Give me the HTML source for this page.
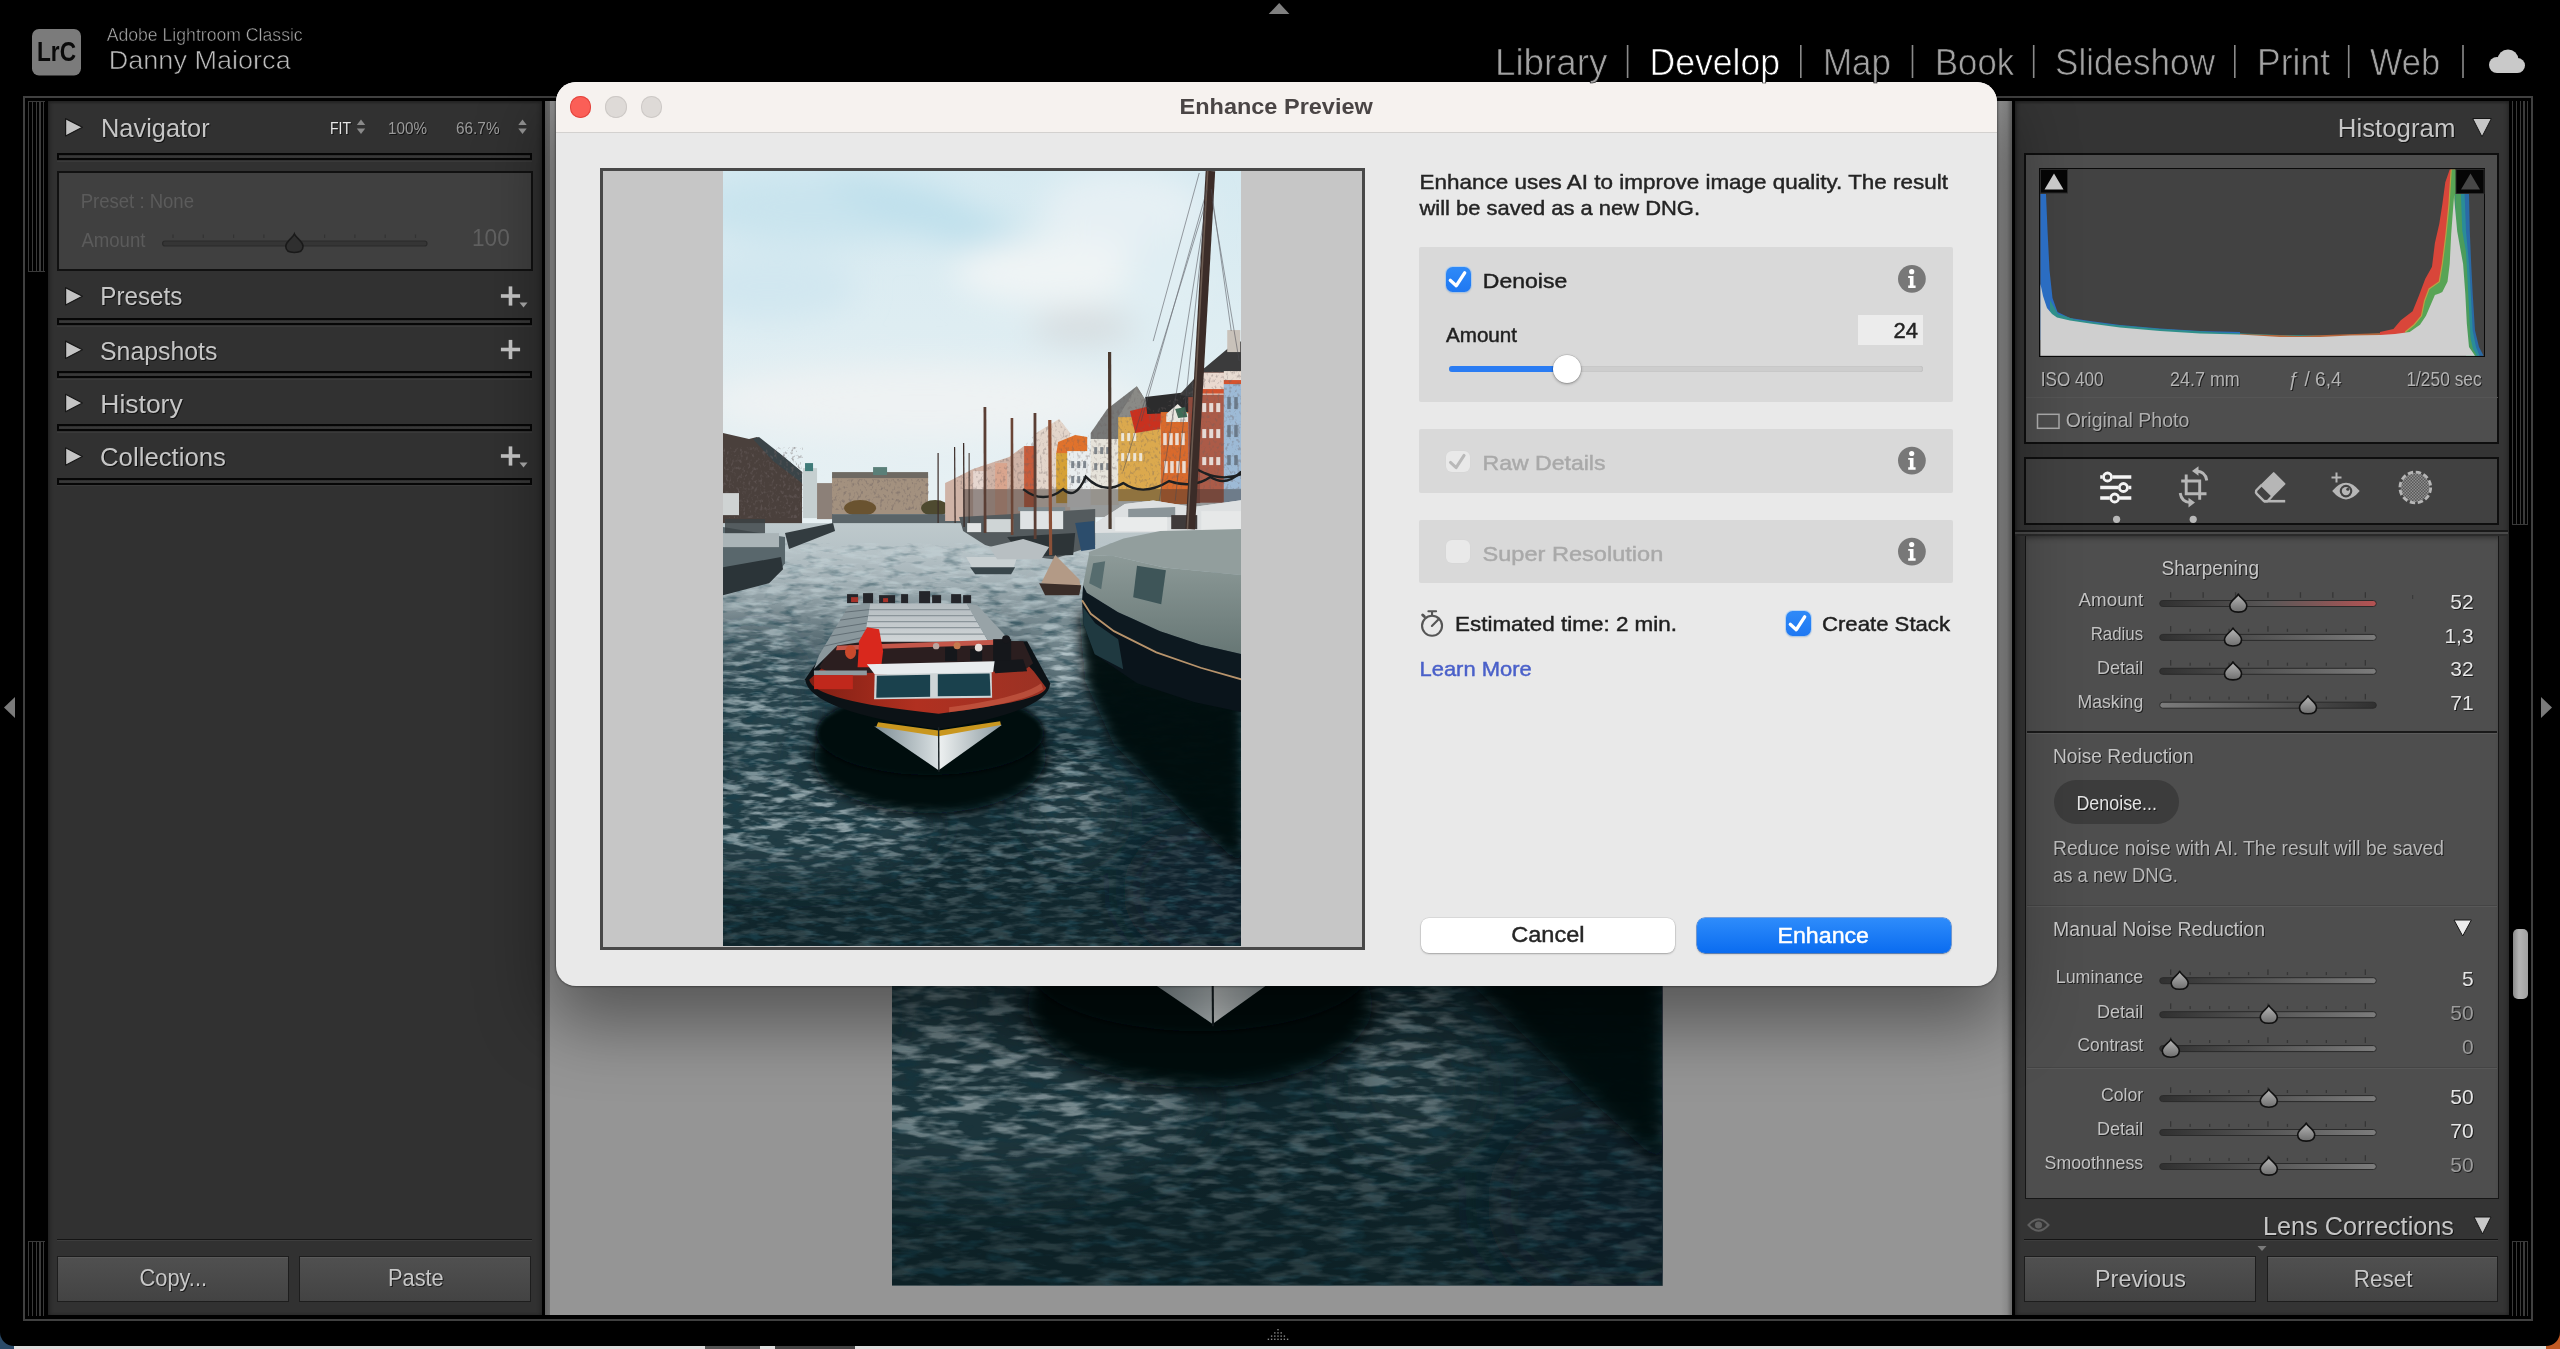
<!DOCTYPE html>
<html lang="en"><head><meta charset="utf-8"><title>Enhance Preview - Adobe Lightroom Classic</title>
<style>
html,body{margin:0;padding:0}
body{width:2560px;height:1349px;position:relative;overflow:hidden;background:#000;font-family:"Liberation Sans",sans-serif}
div{position:absolute}
svg.ph{position:absolute;display:block}
svg#ov{position:absolute;left:0;top:0;width:2560px;height:1349px;font-family:"Liberation Sans",sans-serif}
svg#ov text{white-space:pre}
g.sh{filter:drop-shadow(1px 1.5px .6px rgba(0,0,0,.6))}
</style></head>
<body>
<!-- application chrome -->
<div style="left:0px;top:1330px;width:30px;height:19px;background:#2b4a68"></div>
<div style="left:2530px;top:1330px;width:30px;height:19px;background:#c25a24"></div>
<div style="left:14px;top:1346px;width:2532px;height:3px;background:#dedede"></div>
<div style="left:705px;top:1346px;width:55px;height:3px;background:#555"></div>
<div style="left:775px;top:1346px;width:80px;height:3px;background:#444"></div>
<div style="left:0px;top:0px;width:2560px;height:1346px;background:#000;border-radius:0 0 14px 14px"></div>
<div style="left:23px;top:96px;width:2510px;height:1225px;border:2px solid #404040;box-sizing:border-box"></div>
<div style="left:28.4px;top:101px;width:16.5px;height:169px;background:repeating-linear-gradient(90deg,#3a3a3a 0,#3a3a3a 1.15px,#000 1.15px,#000 3.82px);border-top:1px solid #3a3a3a;border-bottom:1px solid #3a3a3a"></div>
<div style="left:28.4px;top:1241px;width:16.5px;height:73.7px;background:repeating-linear-gradient(90deg,#3a3a3a 0,#3a3a3a 1.15px,#000 1.15px,#000 3.82px);border-top:1px solid #3a3a3a"></div>
<div style="left:2511.9px;top:101px;width:16.5px;height:423px;background:repeating-linear-gradient(90deg,#3a3a3a 0,#3a3a3a 1.15px,#000 1.15px,#000 3.82px);border-bottom:1px solid #3a3a3a"></div>
<div style="left:2511.9px;top:1240.6px;width:16.5px;height:74.1px;background:repeating-linear-gradient(90deg,#3a3a3a 0,#3a3a3a 1.15px,#000 1.15px,#000 3.82px);border-top:1px solid #3a3a3a"></div>
<div style="left:48px;top:101px;width:493.5px;height:1214px;background:#313131;box-shadow:inset 3px 0 4px -2px #1c1c1c, inset -3px 0 4px -2px #222, inset 0 3px 3px -2px #222"></div>
<div style="left:57px;top:153px;width:475px;height:7px;background:linear-gradient(#2a2a2a,#3a3a3a 55%,#333);border:2px solid #060606;box-sizing:border-box"></div>
<div style="left:57px;top:160.5px;width:475px;height:1.0px;background:#3a3a3a"></div>
<div style="left:57px;top:318px;width:475px;height:7px;background:linear-gradient(#2a2a2a,#3a3a3a 55%,#333);border:2px solid #060606;box-sizing:border-box"></div>
<div style="left:57px;top:325.5px;width:475px;height:1.0px;background:#3a3a3a"></div>
<div style="left:57px;top:371px;width:475px;height:7px;background:linear-gradient(#2a2a2a,#3a3a3a 55%,#333);border:2px solid #060606;box-sizing:border-box"></div>
<div style="left:57px;top:378.5px;width:475px;height:1.0px;background:#3a3a3a"></div>
<div style="left:57px;top:424px;width:475px;height:7px;background:linear-gradient(#2a2a2a,#3a3a3a 55%,#333);border:2px solid #060606;box-sizing:border-box"></div>
<div style="left:57px;top:431.5px;width:475px;height:1.0px;background:#3a3a3a"></div>
<div style="left:57px;top:477.5px;width:475px;height:7.0px;background:linear-gradient(#2a2a2a,#3a3a3a 55%,#333);border:2px solid #060606;box-sizing:border-box"></div>
<div style="left:57px;top:485.0px;width:475px;height:1.0px;background:#3a3a3a"></div>
<div style="left:56.5px;top:170.5px;width:476.0px;height:100.0px;background:#404040;border:2.4px solid #111;box-sizing:border-box"></div>
<div style="left:57px;top:1238.5px;width:475px;height:1.5px;background:#141414"></div>
<div style="left:57px;top:1240px;width:475px;height:1px;background:#3d3d3d"></div>
<div style="left:57px;top:1256px;width:231.5px;height:45.5px;background:linear-gradient(#505050,#434343);border:1.5px solid #1d1d1d;box-sizing:border-box;box-shadow:inset 0 1px 0 #5a5a5a"></div>
<div style="left:299px;top:1256px;width:231.5px;height:45.5px;background:linear-gradient(#505050,#434343);border:1.5px solid #1d1d1d;box-sizing:border-box;box-shadow:inset 0 1px 0 #5a5a5a"></div>
<div style="left:545px;top:101px;width:1466.5px;height:1214px;background:linear-gradient(90deg,#646464 0,#707070 4.5px,#959595 5.5px,#959595 1456px,#8a8a8a 1462px,#6a6a6a 1466px)"></div>
<div style="left:2014.5px;top:101px;width:494.0px;height:1214px;background:#343434;box-shadow:inset 3px 0 4px -2px #1c1c1c, inset -3px 0 4px -2px #222, inset 0 3px 3px -2px #222"></div>
<div style="left:2024px;top:153px;width:475px;height:291px;background:#4e4e4e;border:2px solid #0e0e0e;box-sizing:border-box"></div>
<div style="left:2038.8px;top:167.5px;width:446.7px;height:189.5px;background:#424242;border:1.8px solid #0a0a0a;box-sizing:border-box"></div>
<div style="left:2026px;top:397px;width:471.5px;height:1px;background:#555"></div>
<div style="left:2024px;top:456.5px;width:475px;height:68.0px;background:#414141;border:2px solid #0e0e0e;box-sizing:border-box"></div>
<div style="left:2015px;top:530px;width:493px;height:2px;background:#1a1a1a"></div>
<div style="left:2015px;top:532px;width:493px;height:1.5px;background:#4a4a4a"></div>
<div style="left:2015px;top:533.5px;width:493px;height:2.5px;background:#2a2a2a"></div>
<div style="left:2025px;top:536px;width:473.5px;height:663px;background:#4e4e4e;border:1.5px solid #161616;border-top:none;box-sizing:border-box;box-shadow:inset 0 5px 5px -3px #333"></div>
<div style="left:2026.5px;top:730.5px;width:470.5px;height:2.5px;background:#1a1a1a"></div>
<div style="left:2026.5px;top:733px;width:470.5px;height:1px;background:#5a5a5a"></div>
<div style="left:2026.5px;top:904.5px;width:470.5px;height:1.0px;background:#444"></div>
<div style="left:2026.5px;top:905.5px;width:470.5px;height:1.0px;background:#585858"></div>
<div style="left:2026.5px;top:1067px;width:470.5px;height:1px;background:#444"></div>
<div style="left:2026.5px;top:1068px;width:470.5px;height:1px;background:#585858"></div>
<div style="left:2054px;top:780px;width:125px;height:43.5px;background:#3c3c3c;border-radius:22px"></div>
<div style="left:2512.5px;top:929px;width:15.0px;height:70px;background:linear-gradient(90deg,#8a8a8a,#b4b4b4 40%,#a0a0a0);border-radius:5px"></div>
<div style="left:2024px;top:1238.5px;width:474px;height:1.5px;background:#141414"></div>
<div style="left:2024px;top:1240px;width:474px;height:1px;background:#3d3d3d"></div>
<div style="left:2024px;top:1256px;width:231.5px;height:45.5px;background:linear-gradient(#505050,#434343);border:1.5px solid #1d1d1d;box-sizing:border-box;box-shadow:inset 0 1px 0 #5a5a5a"></div>
<div style="left:2266.5px;top:1256px;width:231.5px;height:45.5px;background:linear-gradient(#505050,#434343);border:1.5px solid #1d1d1d;box-sizing:border-box;box-shadow:inset 0 1px 0 #5a5a5a"></div>
<!-- main photo in the develop view -->
<svg class="ph" style="left:892px;top:133px;width:770.5px;height:1152.7px" viewBox="0 0 518 775" preserveAspectRatio="none">
<defs>
<linearGradient id="msky" x1="0" x2="0" y1="0" y2="1"><stop offset="0" stop-color="#d6eaf1"/><stop offset=".4" stop-color="#e6f0f3"/><stop offset=".75" stop-color="#eef2f3"/><stop offset="1" stop-color="#eff2f3"/></linearGradient>
<linearGradient id="mwat" x1="0" x2="0" y1="0" y2="1"><stop offset="0" stop-color="#bec9cc"/><stop offset=".07" stop-color="#b6c2c6"/><stop offset=".14" stop-color="#a2b0b5"/><stop offset=".21" stop-color="#7d8e94"/><stop offset=".30" stop-color="#4d626a"/><stop offset=".40" stop-color="#263f48"/><stop offset=".50" stop-color="#152e36"/><stop offset="1" stop-color="#10252b"/></linearGradient>
<linearGradient id="mmg" x1="0" x2="0" y1="0" y2="1"><stop offset="0" stop-color="#555"/><stop offset=".2" stop-color="#aaa"/><stop offset=".4" stop-color="#fff"/><stop offset="1" stop-color="#fff"/></linearGradient>
<linearGradient id="mtarp" x1="0" x2="0" y1="0" y2="1"><stop offset="0" stop-color="#8d9a98"/><stop offset="1" stop-color="#677775"/></linearGradient>
<linearGradient id="mroof" x1="0" x2="0" y1="0" y2="1"><stop offset="0" stop-color="#b4bcc0"/><stop offset="1" stop-color="#d0d5d7"/></linearGradient>
<linearGradient id="mhl" x1="0" x2="1" y1="0" y2="0"><stop offset="0" stop-color="#7d8d94"/><stop offset="1" stop-color="#d9e0e2"/></linearGradient>
<linearGradient id="mhr" x1="0" x2="1" y1="0" y2="0"><stop offset="0" stop-color="#eef1f1"/><stop offset="1" stop-color="#8b9aa0"/></linearGradient>
<linearGradient id="mdeck" x1="0" x2="1" y1="0" y2="0"><stop offset="0" stop-color="#7f1f14"/><stop offset=".45" stop-color="#b13020"/><stop offset="1" stop-color="#9a3224"/></linearGradient>
<filter id="mb18" x="-60%" y="-60%" width="220%" height="220%"><feGaussianBlur stdDeviation="16"/></filter>
<filter id="mb8" x="-30%" y="-30%" width="160%" height="160%"><feGaussianBlur stdDeviation="6"/></filter>
<filter id="mb3" x="-30%" y="-30%" width="160%" height="160%"><feGaussianBlur stdDeviation="2.5"/></filter>
<filter id="mrip" x="0" y="0" width="100%" height="100%"><feTurbulence type="fractalNoise" baseFrequency="0.045 0.17" numOctaves="3" seed="7"/><feColorMatrix type="matrix" values="0 0 0 0 0.58  0 0 0 0 0.68  0 0 0 0 0.71  3.6 0 0 0 -1.58"/></filter>
<filter id="mrip2" x="0" y="0" width="100%" height="100%"><feTurbulence type="fractalNoise" baseFrequency="0.05 0.16" numOctaves="3" seed="23"/><feColorMatrix type="matrix" values="0 0 0 0 0.01  0 0 0 0 0.05  0 0 0 0 0.07  -3.6 0 0 0 1.70"/></filter>
<filter id="mwin" x="0" y="0" width="100%" height="100%"><feTurbulence type="fractalNoise" baseFrequency="0.35 0.25" numOctaves="2" seed="5"/><feColorMatrix type="matrix" values="0 0 0 0 0.15  0 0 0 0 0.12  0 0 0 0 0.12  -4 0 0 0 1.9"/></filter>
<clipPath id="mcw"><rect x="0" y="372" width="518" height="403"/></clipPath>
<clipPath id="mcb"><polygon points="222,312 250,298 286,286 301,275 313,262 336,248 347,262 364,266 384,238 413.600,215.300 429,240 456,224 480,198 504,178 518,170 518,318 222,318"/></clipPath>
</defs>
<rect width="518" height="775" fill="url(#msky)"/>
<g filter="url(#mb18)">
<ellipse cx="100" cy="36" rx="140" ry="36" fill="#c9e4ee"/>
<ellipse cx="215" cy="46" rx="115" ry="22" fill="#bfe0ec" transform="rotate(18 215 46)"/>
<ellipse cx="45" cy="115" rx="90" ry="34" fill="#d1e7f0"/>
<ellipse cx="400" cy="40" rx="80" ry="40" fill="#e6f0f4"/>
<ellipse cx="330" cy="100" rx="100" ry="34" fill="#eff4f5"/>
<ellipse cx="360" cy="156" rx="52" ry="16" fill="#d6dbde"/>
<ellipse cx="200" cy="232" rx="220" ry="38" fill="#eef2f3"/>
<ellipse cx="440" cy="110" rx="40" ry="50" fill="#e0eef3"/>
</g>
<g>
<polygon points="0,262 26,268 34,266 58,284 79,301 79,356 0,356" fill="#4a403c"/>
<polygon points="30,268 36,266 60,285 79,301 79,312 50,290" fill="#3a4448"/>
<rect x="0" y="276" width="79" height="70" filter="url(#mwin)" opacity=".5"/>
<rect x="0" y="322" width="16" height="22" fill="#cfd3d3"/>
<rect x="80" y="297" width="14" height="50" fill="#c5cfd0"/><rect x="82" y="292" width="8" height="8" fill="#3f7a78"/>
<rect x="94" y="312" width="16" height="36" fill="#8c8078"/>
<rect x="109" y="305" width="96" height="38" fill="#a3917f"/><rect x="109" y="301" width="96" height="6" fill="#6e6962"/>
<rect x="109" y="308" width="96" height="30" filter="url(#mwin)" opacity=".45"/>
<rect x="150" y="296" width="14" height="8" fill="#5a7f78"/>
<ellipse cx="137" cy="337" rx="16" ry="8" fill="#6a5330"/><ellipse cx="212" cy="337" rx="14" ry="8" fill="#4e4a30"/>
<rect x="109" y="343" width="130" height="12" fill="#5a6468"/>
<polygon points="222,312 250,298 286,286 301,275 313,275 313,350 222,350" fill="#cfb3a6"/>
<rect x="250" y="300" width="14" height="46" fill="#e6d6cf"/><rect x="272" y="292" width="12" height="54" fill="#d9a58e"/>
<rect x="301" y="275" width="12.500" height="70" fill="#c65c3c"/>
<polygon points="313,262 336,248 347,262 347,340 313,340" fill="#e3d5ca"/>
<polygon points="335,271 352,264 364,266 364,283 333,283" fill="#e0722c"/>
<rect x="333" y="282" width="12" height="50" fill="#d6a136"/>
<rect x="344" y="280" width="24" height="56" fill="#e9edee"/>
<polygon points="367.500,262 384,238 413.600,215.300 429,240 429,268 367.500,268" fill="#777877"/>
<rect x="367.500" y="268" width="28" height="66" fill="#e6e3da"/>
<rect x="395" y="246" width="42.500" height="84" fill="#dba94e"/>
<polygon points="395,246 413.600,215.300 429,240 437,246" fill="#8a8a86"/>
<polygon points="406.800,240 439.200,232 437,258 412,262" fill="#c9311f"/>
<polygon points="422,226 473,220 476,241 424,243" fill="#2c2c2d"/>
<rect x="437.500" y="241" width="27.500" height="92" fill="#d96a2c"/>
<polygon points="443,243 454.500,233 465,243 465,251 443,251" fill="#e9e6df"/><polygon points="452,238 462,236 464,246 455,247" fill="#3d6b55"/>
<polygon points="456,224 480,198 504,178 518,170 518,215 476.700,215 470,226" fill="#3b3b3c"/>
<rect x="465" y="226" width="12" height="106" fill="#8f4a3c"/>
<rect x="476.700" y="201.600" width="24" height="130" fill="#ab5b48"/>
<rect x="476.700" y="201.600" width="24" height="22" fill="#ead9cf"/><rect x="476.700" y="218" width="24" height="4.500" fill="#d4532f"/>
<rect x="500.600" y="213" width="17.400" height="120" fill="#9dbad6"/>
<rect x="500.600" y="200" width="17.400" height="13" fill="#e8dcd2"/><rect x="500.600" y="209" width="17.400" height="4" fill="#d4532f"/>
<rect x="504" y="159" width="13" height="22" fill="#c9c2ba"/>
<g clip-path="url(#mcb)"><rect x="232" y="200" width="286" height="120" filter="url(#mwin)" opacity=".34"/></g>
<g fill="#f1f1ee" opacity=".85"><rect x="479" y="232" width="4" height="9"/><rect x="486" y="232" width="4" height="9"/><rect x="493" y="232" width="4" height="9"/><rect x="479" y="258" width="4" height="9"/><rect x="486" y="258" width="4" height="9"/><rect x="493" y="258" width="4" height="9"/><rect x="479" y="286" width="4" height="8"/><rect x="486" y="286" width="4" height="8"/><rect x="493" y="286" width="4" height="8"/>
<rect x="440" y="262" width="3.500" height="12"/><rect x="446" y="262" width="3.500" height="12"/><rect x="452" y="262" width="3.500" height="12"/><rect x="458" y="262" width="3.500" height="12"/><rect x="441" y="290" width="3.500" height="12"/><rect x="447" y="290" width="3.500" height="12"/><rect x="453" y="290" width="3.500" height="12"/><rect x="459" y="290" width="3.500" height="12"/>
<rect x="398" y="262" width="3" height="8"/><rect x="404" y="262" width="3" height="8"/><rect x="410" y="262" width="3" height="8"/><rect x="398" y="282" width="3" height="8"/><rect x="404" y="282" width="3" height="8"/><rect x="410" y="282" width="3" height="8"/><rect x="416" y="282" width="3" height="8"/></g>
<g fill="#56606a" opacity=".7"><rect x="348" y="290" width="3" height="7"/><rect x="354" y="290" width="3" height="7"/><rect x="360" y="290" width="3" height="7"/><rect x="348" y="305" width="3" height="7"/><rect x="354" y="305" width="3" height="7"/><rect x="360" y="305" width="3" height="7"/><rect x="371" y="276" width="3" height="7"/><rect x="377" y="276" width="3" height="7"/><rect x="383" y="276" width="3" height="7"/><rect x="371" y="292" width="3" height="7"/><rect x="377" y="292" width="3" height="7"/><rect x="383" y="292" width="3" height="7"/>
<rect x="504" y="226" width="3.500" height="12"/><rect x="511" y="226" width="3.500" height="12"/><rect x="504" y="254" width="3.500" height="12"/><rect x="511" y="254" width="3.500" height="12"/><rect x="504" y="284" width="3.500" height="10"/><rect x="511" y="284" width="3.500" height="10"/></g>
<rect x="240" y="318" width="278" height="28" fill="#35302e" opacity=".45"/>
<path d="M300,318 Q320,334 340,318 Q352,330 362.500,305.600 Q380,324 400,312 Q420,326 446,310 Q470,318 487,306 Q503,316 518,300.500" fill="none" stroke="#1d2022" stroke-width="2.400"/>
<path d="M470,296 Q495,312 518,303" fill="none" stroke="#1d2022" stroke-width="2.400"/>
<polygon points="372,352 401.700,333 430,329.500 470,336 518,329 518,362 372,362" fill="#dde0e1"/>
<polygon points="405,338 452,336 452,346 405,347" fill="#8a9498"/>
</g>
<rect x="0" y="352" width="518" height="423" fill="url(#mwat)"/>
<g filter="url(#mb18)">
<ellipse cx="60" cy="655" rx="150" ry="55" fill="#243f48" opacity=".85"/>
<ellipse cx="30" cy="540" rx="55" ry="70" fill="#2b464f" opacity=".7"/>
<ellipse cx="350" cy="640" rx="45" ry="50" fill="#213c45" opacity=".7"/>
<ellipse cx="480" cy="720" rx="80" ry="70" fill="#0d2229" opacity=".8"/>
<ellipse cx="338" cy="470" rx="26" ry="50" fill="#7d9096" opacity=".8"/>
</g>
<mask id="mmk" maskUnits="userSpaceOnUse" x="0" y="372" width="518" height="403"><rect x="0" y="372" width="518" height="403" fill="#353535"/>
<g filter="url(#mb18)"><ellipse cx="70" cy="640" rx="130" ry="50" fill="#d0d0d0"/><ellipse cx="40" cy="520" rx="50" ry="60" fill="#ccc"/><ellipse cx="345" cy="620" rx="42" ry="55" fill="#aaa"/><ellipse cx="340" cy="480" rx="30" ry="60" fill="#fff"/><rect x="0" y="372" width="518" height="90" fill="#aaa"/><ellipse cx="260" cy="690" rx="120" ry="30" fill="#6a6a6a"/></g></mask>
<mask id="mmk2" maskUnits="userSpaceOnUse" x="0" y="372" width="518" height="403"><rect x="0" y="372" width="518" height="403" fill="url(#mmg)"/></mask>
<g clip-path="url(#mcw)"><g mask="url(#mmk2)"><rect x="0" y="372" width="518" height="403" filter="url(#mrip2)" opacity=".8"/></g>
<g mask="url(#mmk)"><rect x="0" y="372" width="518" height="403" filter="url(#mrip)" opacity=".8"/></g></g>
<g>
<polygon points="0,356 62,366 62,392 48,410 0,420" fill="#59676c"/>
<polygon points="0,396 58,386 60,398 46,412 0,424" fill="#2b3438"/>
<rect x="0" y="362" width="56" height="14" fill="#aab4b7"/>
<rect x="2" y="348" width="40" height="14" fill="#3a4144" opacity=".8"/>
<polygon points="62,362 110,352 112,360 66,378" fill="#333c40"/>
<polygon points="236,346 372,338 372,374 330,388 296,384 262,374 240,360" fill="#545b5e"/>
<rect x="297" y="338" width="43" height="20" fill="#dfe3e4"/><rect x="295" y="336" width="47" height="4" fill="#7d888c"/>
<rect x="262" y="348" width="28" height="13" fill="#cfd5d6"/>
<rect x="244" y="352" width="14" height="9" fill="#e2e5e5"/>
<polygon points="284,366 352,362 350,384 300,386" fill="#2d3437"/>
<polygon points="243,386 294,386 290,398 250,398" fill="#c9d0d2"/><polygon points="247,396 292,396 288,403 252,403" fill="#39464b"/>
<polygon points="318,412 332,384 356,408 358,418" fill="#b39a86"/><polygon points="316,412 358,414 356,424 322,424" fill="#3a2d28"/>
<polygon points="266,376 300,368 326,376 318,388 274,388" fill="#b8bfc2"/>
<polygon points="352,352 371,350 372,378 358,380" fill="#2c4d6c"/>
<polygon points="372,352 401.700,333 430,329.500 470,336 518,329 518,360 372,362" fill="#dde0e1"/>
<polygon points="405,338 452,336 452,346 405,347" fill="#8a9498"/>
<rect x="392" y="346" width="52" height="14" fill="#e9ebeb"/>
<rect x="478" y="340" width="40" height="20" fill="#e6e8e8"/>
<rect x="448" y="344" width="26" height="14" fill="#3f3a3a"/>
</g>
<polygon points="356,440 518,490 518,694 475,655 391,574 362,510" fill="#040a0f" opacity=".95" filter="url(#mb8)"/>
<polygon points="359.900,413.800 365.700,384 390.700,384.900 440.800,396.400 518,404 518,483 477.400,473.500 437,460 394.600,440.800 363.700,421.500" fill="url(#mtarp)"/>
<polygon points="365.700,381 400.400,367.500 437,359.800 518,357.900 518,404 440.800,396.400 390.700,384.900 365.700,384" fill="#929e9d"/>
<polygon points="413.800,394.500 442.700,399 438,433 410,426" fill="#3e5558"/>
<polygon points="370,392 382,390 378,418 366,412" fill="#566c6e"/>
<polygon points="359.900,413.800 363.700,421.500 394.600,440.800 437,460 477.400,473.500 518,483 518,508.200 477.400,496.600 433.100,481.200 390.700,460 367.600,442.700 358.900,429.200" fill="#0d1920"/>
<polygon points="358.900,429.200 367.600,442.700 390.700,460 433.100,481.200 477.400,496.600 518,508.200 518,541 471.600,531 413.800,512 371.500,483 360,452" fill="#0a141b"/>
<polygon points="360,436 372,452 395,468 400,498 371.500,483 360,452" fill="#24424a" opacity=".8"/>
<polyline points="358.900,429.200 367.600,442.700 390.700,460 433.100,481.200 477.400,496.600 518,508.200" fill="none" stroke="#b8946c" stroke-width="1.800"/>
<ellipse cx="207" cy="586" rx="116" ry="56" fill="#02070b" filter="url(#mb8)"/>
<ellipse cx="207" cy="562" rx="114" ry="42" fill="#02070b" filter="url(#mb3)"/>
<path d="M82,508 Q86,540 215.500,558 Q326,540 327,512 L304,470 L108,470 Z" fill="#0c1216"/>
<polygon points="155,551 215.500,559.300 277,550 278,554.600 215.500,566 153,556" fill="#c9971f"/>
<polygon points="151,555 215.500,565 215.500,599" fill="url(#mhl)"/><polygon points="215.500,565 279,553.500 215.500,599" fill="url(#mhr)"/>
<line x1="215.500" y1="556" x2="215.800" y2="600.500" stroke="#1a2226" stroke-width="1.400"/>
<path d="M86.200,508.700 Q90,530 215.500,542.500 Q320,530 323,516.500 L310.500,500 L301,490 L106,490 Z" fill="url(#mdeck)"/>
<path d="M226,536 Q300,526 318,512 L320,518 Q300,532 226,541 Z" fill="#d0664e" opacity=".55"/>
<polygon points="96,496 112,470 300,470 310,492 300,500 108,502" fill="#2b1e1f"/>
<polygon points="147,432.400 243.500,432.400 265.300,470.500 140.700,470.500" fill="url(#mroof)"/>
<g stroke="#8b959a" stroke-width="1.100"><line x1="146" y1="438.500" x2="247" y2="438.500"/><line x1="145" y1="444.500" x2="250.500" y2="444.500"/><line x1="144" y1="450.500" x2="254" y2="450.500"/><line x1="143" y1="456.500" x2="257.500" y2="456.500"/><line x1="142" y1="463" x2="261" y2="463"/></g>
<polygon points="125,435.500 147,432.400 140.700,470.500 114.200,474.400 90.900,497.800 96,484" fill="#8a979c"/>
<g stroke="#5d6a70" stroke-width=".9"><line x1="122" y1="441" x2="146" y2="438.500"/><line x1="117" y1="449" x2="145" y2="445"/><line x1="112" y1="457" x2="143.500" y2="452"/><line x1="107" y1="465" x2="142.500" y2="459"/><line x1="101" y1="475" x2="141" y2="466"/></g>
<polygon points="243.500,432.400 254.400,434 285.600,468.200 265.300,470.500" fill="#98a3a7"/>
<polygon points="114,474.500 285.600,468.200 287,473 113,479" fill="#c4574a"/>
<polygon points="90.900,499.300 143.800,499.300 143.800,504 90.900,504" fill="#8f9a9e"/>
<rect x="91" y="504" width="38.800" height="14" fill="#c0281c"/>
<polygon points="136,470 144,456 156,458 160,480 158,496.200 134.500,496.200" fill="#d9281d"/>
<ellipse cx="127.500" cy="481" rx="5.500" ry="7" fill="#c9492c"/>
<g fill="#15171b"><rect x="222" y="476" width="12" height="14"/><rect x="247" y="478" width="12" height="12"/><rect x="270" y="468" width="18" height="28"/><polygon points="268,490 300,488 304,500 272,502"/></g>
<circle cx="255.500" cy="476.500" r="3.800" fill="#e6deda"/><circle cx="234" cy="474.500" r="3.500" fill="#c47a4e"/><circle cx="283" cy="468" r="4" fill="#17171b"/><circle cx="213" cy="475" r="3.200" fill="#b9a6a0"/>
<polygon points="143.800,493.100 271.500,490 270,500.900 263.800,502.500 151.600,503.200" fill="#e8ecee"/>
<polygon points="151.600,503.200 268.500,501 269,526.500 151,528" fill="#cfd5d7"/>
<polygon points="153.800,504.500 207,503.500 207,525.500 153.200,526.500" fill="#1a414d"/><polygon points="214.700,503 266.500,502.300 267.500,524.500 214.700,525.200" fill="#1a414d"/>
<g fill="#24252a"><rect x="124" y="423" width="11" height="9"/><rect x="140" y="422" width="10" height="10"/><rect x="156" y="424" width="16" height="8"/><rect x="178" y="423" width="7" height="9"/><rect x="196" y="420" width="11" height="12"/><rect x="209" y="424" width="9" height="8"/><rect x="228" y="423" width="10" height="9"/><rect x="240" y="424" width="8" height="8"/></g>
<rect x="128" y="426" width="7" height="5" fill="#a8322a"/><rect x="160" y="427" width="5" height="4" fill="#a8322a"/>
<g stroke="#3b2c28" stroke-linecap="butt">
<line x1="487.200" y1="0" x2="467" y2="358" stroke-width="9.500"/><line x1="484.400" y1="0" x2="464.200" y2="358" stroke-width="1.600" stroke="#6b5a50"/>
<line x1="386.400" y1="181" x2="386.900" y2="358" stroke-width="3.200" stroke="#4a3a30"/>
<line x1="261.800" y1="236" x2="262" y2="362" stroke-width="2.800" stroke="#5a3e34"/>
<line x1="288.800" y1="247" x2="289" y2="364" stroke-width="2.600" stroke="#6a4536"/>
<line x1="311.800" y1="242" x2="312" y2="368" stroke-width="2.800" stroke="#5a3e34"/>
<line x1="326.600" y1="249" x2="327.500" y2="384" stroke-width="3.200" stroke="#8a5038"/>
<line x1="215" y1="282" x2="215" y2="352" stroke-width="1.200"/><line x1="231.500" y1="276" x2="232" y2="352" stroke-width="1.200"/><line x1="240.500" y1="272" x2="241" y2="356" stroke-width="1.300"/>
<line x1="246" y1="282" x2="246" y2="352" stroke-width="1"/>
</g>
<g stroke="#4a4a52" stroke-width=".7" opacity=".75" fill="none">
<line x1="484" y1="18" x2="418" y2="250"/><line x1="483" y1="30" x2="400" y2="300"/><line x1="482" y1="40" x2="436" y2="330"/><line x1="480" y1="60" x2="452" y2="330"/>
<line x1="488" y1="18" x2="508" y2="160"/><line x1="489" y1="30" x2="516" y2="190"/><line x1="476" y1="2" x2="430" y2="170"/>

</g>
<rect width="518" height="775" fill="#020a0e" opacity="0.16"/>
</svg>
<!-- enhance dialog -->
<div style="left:555.5px;top:82px;width:1441.5px;height:904px;background:#e9e9e9;border-radius:20px;box-shadow:0 30px 70px 8px rgba(0,0,0,.42),0 0 2px 1px rgba(0,0,0,.35);overflow:hidden"><div style="left:0;top:0;width:100%;height:50px;background:#f6f2ef;border-bottom:1.5px solid #d3d1cf"></div></div>
<div style="left:569.75px;top:96px;width:21.5px;height:21.5px;background:#fb5f57;border-radius:50%;box-shadow:inset 0 0 0 1px #e2463f"></div>
<div style="left:605.25px;top:96px;width:21.5px;height:21.5px;background:#dedad7;border-radius:50%;box-shadow:inset 0 0 0 1px #cdc9c6"></div>
<div style="left:640.75px;top:96px;width:21.5px;height:21.5px;background:#dedad7;border-radius:50%;box-shadow:inset 0 0 0 1px #cdc9c6"></div>
<div style="left:600px;top:167.5px;width:765px;height:782.0px;background:#c6c6c6;border:3px solid #484848;box-sizing:border-box"></div>
<div style="left:1419px;top:247px;width:534px;height:155px;background:#d9d9d9;border-radius:2px"></div>
<div style="left:1419px;top:429px;width:534px;height:63.5px;background:#d9d9d9;border-radius:2px"></div>
<div style="left:1419px;top:520px;width:534px;height:63px;background:#d9d9d9;border-radius:2px"></div>
<div style="left:1445.5px;top:266.8px;width:25.3px;height:25.2px;background:linear-gradient(#2f8af8,#1f78f2);border-radius:6.5px;box-shadow:0 0 0 1px rgba(150,200,255,.55), 0 1px 2px rgba(0,0,0,.18)"></div>
<div style="left:1785.5px;top:611px;width:25.0px;height:25px;background:linear-gradient(#2f8af8,#1f78f2);border-radius:6.5px;box-shadow:0 0 0 1px rgba(150,200,255,.55), 0 1px 2px rgba(0,0,0,.18)"></div>
<div style="left:1446px;top:451px;width:23.5px;height:21px;background:#e9e9e9;border-radius:6px;box-shadow:0 0 0 .5px #d6d6d6"></div>
<div style="left:1446px;top:539.5px;width:23.5px;height:23.0px;background:#e9e9e9;border-radius:6px;box-shadow:0 0 0 .5px #d6d6d6"></div>
<div style="left:1858px;top:315px;width:65px;height:30px;background:#ececec"></div>
<div style="left:1448.5px;top:366px;width:474.0px;height:6px;background:#cdcdcd;border-radius:3px;box-shadow:inset 0 0 1px rgba(0,0,0,.25)"></div>
<div style="left:1448.5px;top:366px;width:117.5px;height:6px;background:#2a7cf3;border-radius:3px"></div>
<div style="left:1552.5px;top:355px;width:28.0px;height:28px;background:#fff;border-radius:50%;box-shadow:0 1px 3px rgba(0,0,0,.35),0 0 0 .5px rgba(0,0,0,.15)"></div>
<div style="left:1420.5px;top:918px;width:254.5px;height:34.5px;background:#fff;border-radius:8px;box-shadow:0 1px 2px rgba(0,0,0,.25),0 0 0 .5px rgba(0,0,0,.12)"></div>
<div style="left:1696.5px;top:918px;width:254.5px;height:34.5px;background:linear-gradient(#2e8cfb,#0a6cf0);border-radius:8px;box-shadow:0 1px 2px rgba(0,0,0,.3),0 0 0 .5px #0c5fd6"></div>
<svg class="ph" style="left:722.5px;top:170.75px;width:518.25px;height:775.25px" viewBox="0 0 518 775" preserveAspectRatio="none">
<defs>
<linearGradient id="psky" x1="0" x2="0" y1="0" y2="1"><stop offset="0" stop-color="#d6eaf1"/><stop offset=".4" stop-color="#e6f0f3"/><stop offset=".75" stop-color="#eef2f3"/><stop offset="1" stop-color="#eff2f3"/></linearGradient>
<linearGradient id="pwat" x1="0" x2="0" y1="0" y2="1"><stop offset="0" stop-color="#bec9cc"/><stop offset=".07" stop-color="#b6c2c6"/><stop offset=".14" stop-color="#a2b0b5"/><stop offset=".21" stop-color="#7d8e94"/><stop offset=".30" stop-color="#4d626a"/><stop offset=".40" stop-color="#263f48"/><stop offset=".50" stop-color="#152e36"/><stop offset="1" stop-color="#10252b"/></linearGradient>
<linearGradient id="pmg" x1="0" x2="0" y1="0" y2="1"><stop offset="0" stop-color="#555"/><stop offset=".2" stop-color="#aaa"/><stop offset=".4" stop-color="#fff"/><stop offset="1" stop-color="#fff"/></linearGradient>
<linearGradient id="ptarp" x1="0" x2="0" y1="0" y2="1"><stop offset="0" stop-color="#8d9a98"/><stop offset="1" stop-color="#677775"/></linearGradient>
<linearGradient id="proof" x1="0" x2="0" y1="0" y2="1"><stop offset="0" stop-color="#b4bcc0"/><stop offset="1" stop-color="#d0d5d7"/></linearGradient>
<linearGradient id="phl" x1="0" x2="1" y1="0" y2="0"><stop offset="0" stop-color="#7d8d94"/><stop offset="1" stop-color="#d9e0e2"/></linearGradient>
<linearGradient id="phr" x1="0" x2="1" y1="0" y2="0"><stop offset="0" stop-color="#eef1f1"/><stop offset="1" stop-color="#8b9aa0"/></linearGradient>
<linearGradient id="pdeck" x1="0" x2="1" y1="0" y2="0"><stop offset="0" stop-color="#7f1f14"/><stop offset=".45" stop-color="#b13020"/><stop offset="1" stop-color="#9a3224"/></linearGradient>
<filter id="pb18" x="-60%" y="-60%" width="220%" height="220%"><feGaussianBlur stdDeviation="16"/></filter>
<filter id="pb8" x="-30%" y="-30%" width="160%" height="160%"><feGaussianBlur stdDeviation="6"/></filter>
<filter id="pb3" x="-30%" y="-30%" width="160%" height="160%"><feGaussianBlur stdDeviation="2.5"/></filter>
<filter id="prip" x="0" y="0" width="100%" height="100%"><feTurbulence type="fractalNoise" baseFrequency="0.045 0.17" numOctaves="3" seed="7"/><feColorMatrix type="matrix" values="0 0 0 0 0.58  0 0 0 0 0.68  0 0 0 0 0.71  3.6 0 0 0 -1.58"/></filter>
<filter id="prip2" x="0" y="0" width="100%" height="100%"><feTurbulence type="fractalNoise" baseFrequency="0.05 0.16" numOctaves="3" seed="23"/><feColorMatrix type="matrix" values="0 0 0 0 0.01  0 0 0 0 0.05  0 0 0 0 0.07  -3.6 0 0 0 1.70"/></filter>
<filter id="pwin" x="0" y="0" width="100%" height="100%"><feTurbulence type="fractalNoise" baseFrequency="0.35 0.25" numOctaves="2" seed="5"/><feColorMatrix type="matrix" values="0 0 0 0 0.15  0 0 0 0 0.12  0 0 0 0 0.12  -4 0 0 0 1.9"/></filter>
<clipPath id="pcw"><rect x="0" y="372" width="518" height="403"/></clipPath>
<clipPath id="pcb"><polygon points="222,312 250,298 286,286 301,275 313,262 336,248 347,262 364,266 384,238 413.600,215.300 429,240 456,224 480,198 504,178 518,170 518,318 222,318"/></clipPath>
</defs>
<rect width="518" height="775" fill="url(#psky)"/>
<g filter="url(#pb18)">
<ellipse cx="100" cy="36" rx="140" ry="36" fill="#c9e4ee"/>
<ellipse cx="215" cy="46" rx="115" ry="22" fill="#bfe0ec" transform="rotate(18 215 46)"/>
<ellipse cx="45" cy="115" rx="90" ry="34" fill="#d1e7f0"/>
<ellipse cx="400" cy="40" rx="80" ry="40" fill="#e6f0f4"/>
<ellipse cx="330" cy="100" rx="100" ry="34" fill="#eff4f5"/>
<ellipse cx="360" cy="156" rx="52" ry="16" fill="#d6dbde"/>
<ellipse cx="200" cy="232" rx="220" ry="38" fill="#eef2f3"/>
<ellipse cx="440" cy="110" rx="40" ry="50" fill="#e0eef3"/>
</g>
<g>
<polygon points="0,262 26,268 34,266 58,284 79,301 79,356 0,356" fill="#4a403c"/>
<polygon points="30,268 36,266 60,285 79,301 79,312 50,290" fill="#3a4448"/>
<rect x="0" y="276" width="79" height="70" filter="url(#pwin)" opacity=".5"/>
<rect x="0" y="322" width="16" height="22" fill="#cfd3d3"/>
<rect x="80" y="297" width="14" height="50" fill="#c5cfd0"/><rect x="82" y="292" width="8" height="8" fill="#3f7a78"/>
<rect x="94" y="312" width="16" height="36" fill="#8c8078"/>
<rect x="109" y="305" width="96" height="38" fill="#a3917f"/><rect x="109" y="301" width="96" height="6" fill="#6e6962"/>
<rect x="109" y="308" width="96" height="30" filter="url(#pwin)" opacity=".45"/>
<rect x="150" y="296" width="14" height="8" fill="#5a7f78"/>
<ellipse cx="137" cy="337" rx="16" ry="8" fill="#6a5330"/><ellipse cx="212" cy="337" rx="14" ry="8" fill="#4e4a30"/>
<rect x="109" y="343" width="130" height="12" fill="#5a6468"/>
<polygon points="222,312 250,298 286,286 301,275 313,275 313,350 222,350" fill="#cfb3a6"/>
<rect x="250" y="300" width="14" height="46" fill="#e6d6cf"/><rect x="272" y="292" width="12" height="54" fill="#d9a58e"/>
<rect x="301" y="275" width="12.500" height="70" fill="#c65c3c"/>
<polygon points="313,262 336,248 347,262 347,340 313,340" fill="#e3d5ca"/>
<polygon points="335,271 352,264 364,266 364,283 333,283" fill="#e0722c"/>
<rect x="333" y="282" width="12" height="50" fill="#d6a136"/>
<rect x="344" y="280" width="24" height="56" fill="#e9edee"/>
<polygon points="367.500,262 384,238 413.600,215.300 429,240 429,268 367.500,268" fill="#777877"/>
<rect x="367.500" y="268" width="28" height="66" fill="#e6e3da"/>
<rect x="395" y="246" width="42.500" height="84" fill="#dba94e"/>
<polygon points="395,246 413.600,215.300 429,240 437,246" fill="#8a8a86"/>
<polygon points="406.800,240 439.200,232 437,258 412,262" fill="#c9311f"/>
<polygon points="422,226 473,220 476,241 424,243" fill="#2c2c2d"/>
<rect x="437.500" y="241" width="27.500" height="92" fill="#d96a2c"/>
<polygon points="443,243 454.500,233 465,243 465,251 443,251" fill="#e9e6df"/><polygon points="452,238 462,236 464,246 455,247" fill="#3d6b55"/>
<polygon points="456,224 480,198 504,178 518,170 518,215 476.700,215 470,226" fill="#3b3b3c"/>
<rect x="465" y="226" width="12" height="106" fill="#8f4a3c"/>
<rect x="476.700" y="201.600" width="24" height="130" fill="#ab5b48"/>
<rect x="476.700" y="201.600" width="24" height="22" fill="#ead9cf"/><rect x="476.700" y="218" width="24" height="4.500" fill="#d4532f"/>
<rect x="500.600" y="213" width="17.400" height="120" fill="#9dbad6"/>
<rect x="500.600" y="200" width="17.400" height="13" fill="#e8dcd2"/><rect x="500.600" y="209" width="17.400" height="4" fill="#d4532f"/>
<rect x="504" y="159" width="13" height="22" fill="#c9c2ba"/>
<g clip-path="url(#pcb)"><rect x="232" y="200" width="286" height="120" filter="url(#pwin)" opacity=".34"/></g>
<g fill="#f1f1ee" opacity=".85"><rect x="479" y="232" width="4" height="9"/><rect x="486" y="232" width="4" height="9"/><rect x="493" y="232" width="4" height="9"/><rect x="479" y="258" width="4" height="9"/><rect x="486" y="258" width="4" height="9"/><rect x="493" y="258" width="4" height="9"/><rect x="479" y="286" width="4" height="8"/><rect x="486" y="286" width="4" height="8"/><rect x="493" y="286" width="4" height="8"/>
<rect x="440" y="262" width="3.500" height="12"/><rect x="446" y="262" width="3.500" height="12"/><rect x="452" y="262" width="3.500" height="12"/><rect x="458" y="262" width="3.500" height="12"/><rect x="441" y="290" width="3.500" height="12"/><rect x="447" y="290" width="3.500" height="12"/><rect x="453" y="290" width="3.500" height="12"/><rect x="459" y="290" width="3.500" height="12"/>
<rect x="398" y="262" width="3" height="8"/><rect x="404" y="262" width="3" height="8"/><rect x="410" y="262" width="3" height="8"/><rect x="398" y="282" width="3" height="8"/><rect x="404" y="282" width="3" height="8"/><rect x="410" y="282" width="3" height="8"/><rect x="416" y="282" width="3" height="8"/></g>
<g fill="#56606a" opacity=".7"><rect x="348" y="290" width="3" height="7"/><rect x="354" y="290" width="3" height="7"/><rect x="360" y="290" width="3" height="7"/><rect x="348" y="305" width="3" height="7"/><rect x="354" y="305" width="3" height="7"/><rect x="360" y="305" width="3" height="7"/><rect x="371" y="276" width="3" height="7"/><rect x="377" y="276" width="3" height="7"/><rect x="383" y="276" width="3" height="7"/><rect x="371" y="292" width="3" height="7"/><rect x="377" y="292" width="3" height="7"/><rect x="383" y="292" width="3" height="7"/>
<rect x="504" y="226" width="3.500" height="12"/><rect x="511" y="226" width="3.500" height="12"/><rect x="504" y="254" width="3.500" height="12"/><rect x="511" y="254" width="3.500" height="12"/><rect x="504" y="284" width="3.500" height="10"/><rect x="511" y="284" width="3.500" height="10"/></g>
<rect x="240" y="318" width="278" height="28" fill="#35302e" opacity=".45"/>
<path d="M300,318 Q320,334 340,318 Q352,330 362.500,305.600 Q380,324 400,312 Q420,326 446,310 Q470,318 487,306 Q503,316 518,300.500" fill="none" stroke="#1d2022" stroke-width="2.400"/>
<path d="M470,296 Q495,312 518,303" fill="none" stroke="#1d2022" stroke-width="2.400"/>
<polygon points="372,352 401.700,333 430,329.500 470,336 518,329 518,362 372,362" fill="#dde0e1"/>
<polygon points="405,338 452,336 452,346 405,347" fill="#8a9498"/>
</g>
<rect x="0" y="352" width="518" height="423" fill="url(#pwat)"/>
<g filter="url(#pb18)">
<ellipse cx="60" cy="655" rx="150" ry="55" fill="#243f48" opacity=".85"/>
<ellipse cx="30" cy="540" rx="55" ry="70" fill="#2b464f" opacity=".7"/>
<ellipse cx="350" cy="640" rx="45" ry="50" fill="#213c45" opacity=".7"/>
<ellipse cx="480" cy="720" rx="80" ry="70" fill="#0d2229" opacity=".8"/>
<ellipse cx="338" cy="470" rx="26" ry="50" fill="#7d9096" opacity=".8"/>
</g>
<mask id="pmk" maskUnits="userSpaceOnUse" x="0" y="372" width="518" height="403"><rect x="0" y="372" width="518" height="403" fill="#353535"/>
<g filter="url(#pb18)"><ellipse cx="70" cy="640" rx="130" ry="50" fill="#d0d0d0"/><ellipse cx="40" cy="520" rx="50" ry="60" fill="#ccc"/><ellipse cx="345" cy="620" rx="42" ry="55" fill="#aaa"/><ellipse cx="340" cy="480" rx="30" ry="60" fill="#fff"/><rect x="0" y="372" width="518" height="90" fill="#aaa"/><ellipse cx="260" cy="690" rx="120" ry="30" fill="#6a6a6a"/></g></mask>
<mask id="pmk2" maskUnits="userSpaceOnUse" x="0" y="372" width="518" height="403"><rect x="0" y="372" width="518" height="403" fill="url(#pmg)"/></mask>
<g clip-path="url(#pcw)"><g mask="url(#pmk2)"><rect x="0" y="372" width="518" height="403" filter="url(#prip2)" opacity=".8"/></g>
<g mask="url(#pmk)"><rect x="0" y="372" width="518" height="403" filter="url(#prip)" opacity=".8"/></g></g>
<g>
<polygon points="0,356 62,366 62,392 48,410 0,420" fill="#59676c"/>
<polygon points="0,396 58,386 60,398 46,412 0,424" fill="#2b3438"/>
<rect x="0" y="362" width="56" height="14" fill="#aab4b7"/>
<rect x="2" y="348" width="40" height="14" fill="#3a4144" opacity=".8"/>
<polygon points="62,362 110,352 112,360 66,378" fill="#333c40"/>
<polygon points="236,346 372,338 372,374 330,388 296,384 262,374 240,360" fill="#545b5e"/>
<rect x="297" y="338" width="43" height="20" fill="#dfe3e4"/><rect x="295" y="336" width="47" height="4" fill="#7d888c"/>
<rect x="262" y="348" width="28" height="13" fill="#cfd5d6"/>
<rect x="244" y="352" width="14" height="9" fill="#e2e5e5"/>
<polygon points="284,366 352,362 350,384 300,386" fill="#2d3437"/>
<polygon points="243,386 294,386 290,398 250,398" fill="#c9d0d2"/><polygon points="247,396 292,396 288,403 252,403" fill="#39464b"/>
<polygon points="318,412 332,384 356,408 358,418" fill="#b39a86"/><polygon points="316,412 358,414 356,424 322,424" fill="#3a2d28"/>
<polygon points="266,376 300,368 326,376 318,388 274,388" fill="#b8bfc2"/>
<polygon points="352,352 371,350 372,378 358,380" fill="#2c4d6c"/>
<polygon points="372,352 401.700,333 430,329.500 470,336 518,329 518,360 372,362" fill="#dde0e1"/>
<polygon points="405,338 452,336 452,346 405,347" fill="#8a9498"/>
<rect x="392" y="346" width="52" height="14" fill="#e9ebeb"/>
<rect x="478" y="340" width="40" height="20" fill="#e6e8e8"/>
<rect x="448" y="344" width="26" height="14" fill="#3f3a3a"/>
</g>
<polygon points="356,440 518,490 518,694 475,655 391,574 362,510" fill="#040a0f" opacity=".95" filter="url(#pb8)"/>
<polygon points="359.900,413.800 365.700,384 390.700,384.900 440.800,396.400 518,404 518,483 477.400,473.500 437,460 394.600,440.800 363.700,421.500" fill="url(#ptarp)"/>
<polygon points="365.700,381 400.400,367.500 437,359.800 518,357.900 518,404 440.800,396.400 390.700,384.900 365.700,384" fill="#929e9d"/>
<polygon points="413.800,394.500 442.700,399 438,433 410,426" fill="#3e5558"/>
<polygon points="370,392 382,390 378,418 366,412" fill="#566c6e"/>
<polygon points="359.900,413.800 363.700,421.500 394.600,440.800 437,460 477.400,473.500 518,483 518,508.200 477.400,496.600 433.100,481.200 390.700,460 367.600,442.700 358.900,429.200" fill="#0d1920"/>
<polygon points="358.900,429.200 367.600,442.700 390.700,460 433.100,481.200 477.400,496.600 518,508.200 518,541 471.600,531 413.800,512 371.500,483 360,452" fill="#0a141b"/>
<polygon points="360,436 372,452 395,468 400,498 371.500,483 360,452" fill="#24424a" opacity=".8"/>
<polyline points="358.900,429.200 367.600,442.700 390.700,460 433.100,481.200 477.400,496.600 518,508.200" fill="none" stroke="#b8946c" stroke-width="1.800"/>
<ellipse cx="207" cy="586" rx="116" ry="56" fill="#02070b" filter="url(#pb8)"/>
<ellipse cx="207" cy="562" rx="114" ry="42" fill="#02070b" filter="url(#pb3)"/>
<path d="M82,508 Q86,540 215.500,558 Q326,540 327,512 L304,470 L108,470 Z" fill="#0c1216"/>
<polygon points="155,551 215.500,559.300 277,550 278,554.600 215.500,566 153,556" fill="#c9971f"/>
<polygon points="151,555 215.500,565 215.500,599" fill="url(#phl)"/><polygon points="215.500,565 279,553.500 215.500,599" fill="url(#phr)"/>
<line x1="215.500" y1="556" x2="215.800" y2="600.500" stroke="#1a2226" stroke-width="1.400"/>
<path d="M86.200,508.700 Q90,530 215.500,542.500 Q320,530 323,516.500 L310.500,500 L301,490 L106,490 Z" fill="url(#pdeck)"/>
<path d="M226,536 Q300,526 318,512 L320,518 Q300,532 226,541 Z" fill="#d0664e" opacity=".55"/>
<polygon points="96,496 112,470 300,470 310,492 300,500 108,502" fill="#2b1e1f"/>
<polygon points="147,432.400 243.500,432.400 265.300,470.500 140.700,470.500" fill="url(#proof)"/>
<g stroke="#8b959a" stroke-width="1.100"><line x1="146" y1="438.500" x2="247" y2="438.500"/><line x1="145" y1="444.500" x2="250.500" y2="444.500"/><line x1="144" y1="450.500" x2="254" y2="450.500"/><line x1="143" y1="456.500" x2="257.500" y2="456.500"/><line x1="142" y1="463" x2="261" y2="463"/></g>
<polygon points="125,435.500 147,432.400 140.700,470.500 114.200,474.400 90.900,497.800 96,484" fill="#8a979c"/>
<g stroke="#5d6a70" stroke-width=".9"><line x1="122" y1="441" x2="146" y2="438.500"/><line x1="117" y1="449" x2="145" y2="445"/><line x1="112" y1="457" x2="143.500" y2="452"/><line x1="107" y1="465" x2="142.500" y2="459"/><line x1="101" y1="475" x2="141" y2="466"/></g>
<polygon points="243.500,432.400 254.400,434 285.600,468.200 265.300,470.500" fill="#98a3a7"/>
<polygon points="114,474.500 285.600,468.200 287,473 113,479" fill="#c4574a"/>
<polygon points="90.900,499.300 143.800,499.300 143.800,504 90.900,504" fill="#8f9a9e"/>
<rect x="91" y="504" width="38.800" height="14" fill="#c0281c"/>
<polygon points="136,470 144,456 156,458 160,480 158,496.200 134.500,496.200" fill="#d9281d"/>
<ellipse cx="127.500" cy="481" rx="5.500" ry="7" fill="#c9492c"/>
<g fill="#15171b"><rect x="222" y="476" width="12" height="14"/><rect x="247" y="478" width="12" height="12"/><rect x="270" y="468" width="18" height="28"/><polygon points="268,490 300,488 304,500 272,502"/></g>
<circle cx="255.500" cy="476.500" r="3.800" fill="#e6deda"/><circle cx="234" cy="474.500" r="3.500" fill="#c47a4e"/><circle cx="283" cy="468" r="4" fill="#17171b"/><circle cx="213" cy="475" r="3.200" fill="#b9a6a0"/>
<polygon points="143.800,493.100 271.500,490 270,500.900 263.800,502.500 151.600,503.200" fill="#e8ecee"/>
<polygon points="151.600,503.200 268.500,501 269,526.500 151,528" fill="#cfd5d7"/>
<polygon points="153.800,504.500 207,503.500 207,525.500 153.200,526.500" fill="#1a414d"/><polygon points="214.700,503 266.500,502.300 267.500,524.500 214.700,525.200" fill="#1a414d"/>
<g fill="#24252a"><rect x="124" y="423" width="11" height="9"/><rect x="140" y="422" width="10" height="10"/><rect x="156" y="424" width="16" height="8"/><rect x="178" y="423" width="7" height="9"/><rect x="196" y="420" width="11" height="12"/><rect x="209" y="424" width="9" height="8"/><rect x="228" y="423" width="10" height="9"/><rect x="240" y="424" width="8" height="8"/></g>
<rect x="128" y="426" width="7" height="5" fill="#a8322a"/><rect x="160" y="427" width="5" height="4" fill="#a8322a"/>
<g stroke="#3b2c28" stroke-linecap="butt">
<line x1="487.200" y1="0" x2="467" y2="358" stroke-width="9.500"/><line x1="484.400" y1="0" x2="464.200" y2="358" stroke-width="1.600" stroke="#6b5a50"/>
<line x1="386.400" y1="181" x2="386.900" y2="358" stroke-width="3.200" stroke="#4a3a30"/>
<line x1="261.800" y1="236" x2="262" y2="362" stroke-width="2.800" stroke="#5a3e34"/>
<line x1="288.800" y1="247" x2="289" y2="364" stroke-width="2.600" stroke="#6a4536"/>
<line x1="311.800" y1="242" x2="312" y2="368" stroke-width="2.800" stroke="#5a3e34"/>
<line x1="326.600" y1="249" x2="327.500" y2="384" stroke-width="3.200" stroke="#8a5038"/>
<line x1="215" y1="282" x2="215" y2="352" stroke-width="1.200"/><line x1="231.500" y1="276" x2="232" y2="352" stroke-width="1.200"/><line x1="240.500" y1="272" x2="241" y2="356" stroke-width="1.300"/>
<line x1="246" y1="282" x2="246" y2="352" stroke-width="1"/>
</g>
<g stroke="#4a4a52" stroke-width=".7" opacity=".75" fill="none">
<line x1="484" y1="18" x2="418" y2="250"/><line x1="483" y1="30" x2="400" y2="300"/><line x1="482" y1="40" x2="436" y2="330"/><line x1="480" y1="60" x2="452" y2="330"/>
<line x1="488" y1="18" x2="508" y2="160"/><line x1="489" y1="30" x2="516" y2="190"/><line x1="476" y1="2" x2="430" y2="170"/>

</g>
</svg>
<!-- vector graphics and text overlay -->
<svg id="ov" viewBox="0 0 2560 1349">
<defs>
<linearGradient id="trk_lr" x1="0" x2="1" y1="0" y2="0"><stop offset="0" stop-color="#303030"/><stop offset="1" stop-color="#7c7c7c"/></linearGradient>
<linearGradient id="trk_rl" x1="0" x2="1" y1="0" y2="0"><stop offset="0" stop-color="#7c7c7c"/><stop offset="1" stop-color="#303030"/></linearGradient>
<linearGradient id="trk_red" x1="0" x2="1" y1="0" y2="0"><stop offset="0" stop-color="#303030"/><stop offset=".5" stop-color="#595757"/><stop offset=".72" stop-color="#7d5757"/><stop offset="1" stop-color="#b65252"/></linearGradient>
<linearGradient id="knobg" x1="0" x2="0" y1="0" y2="1"><stop offset="0" stop-color="#b8b8b8"/><stop offset="1" stop-color="#6e6e6e"/></linearGradient>
<g id="knob"><path d="M0,-9.4 C1.6,-5.6 8.5,-3 8.5,2.2 C8.5,6.6 5,8.600 0,8.600 C-5,8.600 -8.5,6.6 -8.5,2.2 C-8.5,-3 -1.6,-5.6 0,-9.4 Z" fill="url(#knobg)" stroke="#111" stroke-width="1.6" stroke-linejoin="round"/></g>
<pattern id="dots" width="3" height="3" patternUnits="userSpaceOnUse"><rect width="3" height="3" fill="#585858"/><rect width="1.5" height="1.5" fill="#8e8e8e"/><rect x="1.5" y="1.5" width="1.5" height="1.5" fill="#8e8e8e"/></pattern>
</defs>
<rect x="32" y="29" width="49" height="46.6" rx="7" fill="#7b7b7b"/>
<rect x="1626.8" y="45" width="1.6" height="33" fill="#8a8a8a"/>
<rect x="1800.0" y="45" width="1.6" height="33" fill="#8a8a8a"/>
<rect x="1911.7" y="45" width="1.6" height="33" fill="#8a8a8a"/>
<rect x="2032.9" y="45" width="1.6" height="33" fill="#8a8a8a"/>
<rect x="2234.0" y="45" width="1.6" height="33" fill="#8a8a8a"/>
<rect x="2347.8999999999996" y="45" width="1.6" height="33" fill="#8a8a8a"/>
<rect x="2462.2" y="45" width="1.6" height="33" fill="#8a8a8a"/>
<g fill="#c9c9c9"><circle cx="2508" cy="60" r="10.5"/><circle cx="2497" cy="65" r="8"/><circle cx="2517.5" cy="65.5" r="7.5"/><rect x="2497" y="62" width="20" height="11"/></g>
<polygon points="1279.2,3 1268.7,14 1289.4,14" fill="#808080"/>
<polygon points="15,697 15,718 4,707.5" fill="#7a7a7a"/>
<polygon points="2541,697 2541,718 2552,707.5" fill="#7a7a7a"/>
<rect x="1277.3" y="1329.0" width="1.4" height="1.4" fill="#8a8a8a"/><rect x="1274.1" y="1332.2" width="1.4" height="1.4" fill="#8a8a8a"/><rect x="1277.3" y="1332.2" width="1.4" height="1.4" fill="#8a8a8a"/><rect x="1280.5" y="1332.2" width="1.4" height="1.4" fill="#8a8a8a"/><rect x="1270.9" y="1335.4" width="1.4" height="1.4" fill="#8a8a8a"/><rect x="1274.1" y="1335.4" width="1.4" height="1.4" fill="#8a8a8a"/><rect x="1277.3" y="1335.4" width="1.4" height="1.4" fill="#8a8a8a"/><rect x="1280.5" y="1335.4" width="1.4" height="1.4" fill="#8a8a8a"/><rect x="1283.7" y="1335.4" width="1.4" height="1.4" fill="#8a8a8a"/><rect x="1267.7" y="1338.6" width="1.4" height="1.4" fill="#8a8a8a"/><rect x="1270.9" y="1338.6" width="1.4" height="1.4" fill="#8a8a8a"/><rect x="1274.1" y="1338.6" width="1.4" height="1.4" fill="#8a8a8a"/><rect x="1277.3" y="1338.6" width="1.4" height="1.4" fill="#8a8a8a"/><rect x="1280.5" y="1338.6" width="1.4" height="1.4" fill="#8a8a8a"/><rect x="1283.7" y="1338.6" width="1.4" height="1.4" fill="#8a8a8a"/><rect x="1286.9" y="1338.6" width="1.4" height="1.4" fill="#8a8a8a"/>
<polygon points="65.6,118.6 65.6,136.0 82.4,127.3" fill="#c4c4c4" stroke="#161616" stroke-width="1.2" stroke-linejoin="round"/>
<polygon points="65.6,287.6 65.6,305.0 82.4,296.3" fill="#c4c4c4" stroke="#161616" stroke-width="1.2" stroke-linejoin="round"/>
<polygon points="65.6,341.1 65.6,358.5 82.4,349.8" fill="#c4c4c4" stroke="#161616" stroke-width="1.2" stroke-linejoin="round"/>
<polygon points="65.6,394.3 65.6,411.7 82.4,403" fill="#c4c4c4" stroke="#161616" stroke-width="1.2" stroke-linejoin="round"/>
<polygon points="65.6,447.8 65.6,465.2 82.4,456.5" fill="#c4c4c4" stroke="#161616" stroke-width="1.2" stroke-linejoin="round"/>
<polygon points="356.8,125 365.2,125 361,119.5" fill="#8a8a8a"/>
<polygon points="356.8,128.5 365.2,128.5 361,134" fill="#8a8a8a"/>
<polygon points="518.3,125 526.7,125 522.5,119.5" fill="#8a8a8a"/>
<polygon points="518.3,128.5 526.7,128.5 522.5,134" fill="#8a8a8a"/>
<rect x="500.9" y="294.2" width="19.2" height="3.6" fill="#bcbcbc"/><rect x="508.7" y="286.4" width="3.6" height="19.2" fill="#bcbcbc"/>
<polygon points="519.5,302.5 527.5,302.5 523.5,307.5" fill="#9a9a9a"/>
<rect x="500.9" y="347.7" width="19.2" height="3.6" fill="#bcbcbc"/><rect x="508.7" y="339.9" width="3.6" height="19.2" fill="#bcbcbc"/>
<rect x="500.9" y="454.2" width="19.2" height="3.6" fill="#bcbcbc"/><rect x="508.7" y="446.4" width="3.6" height="19.2" fill="#bcbcbc"/>
<polygon points="519.5,462.5 527.5,462.5 523.5,467.5" fill="#9a9a9a"/>
<rect x="172.4" y="234.5" width="1.2" height="3.5" fill="#333"/><rect x="202.7" y="234.5" width="1.2" height="3.5" fill="#333"/><rect x="233.0" y="234.5" width="1.2" height="3.5" fill="#333"/><rect x="263.3" y="234.5" width="1.2" height="3.5" fill="#333"/><rect x="293.6" y="234.5" width="1.2" height="3.5" fill="#333"/><rect x="324.0" y="234.5" width="1.2" height="3.5" fill="#333"/><rect x="354.3" y="234.5" width="1.2" height="3.5" fill="#333"/><rect x="384.6" y="234.5" width="1.2" height="3.5" fill="#333"/><rect x="414.9" y="234.5" width="1.2" height="3.5" fill="#333"/><rect x="162.6" y="241" width="264.4" height="5" rx="2.5" fill="#353535" stroke="#2a2a2a" stroke-width="1.2"/>
<path transform="translate(294.4,243.5)" d="M0,-9.5 C1.5,-5.5 8.6,-2.5 8.6,3 C8.6,7 5,9 0,9 C-5,9 -8.6,7 -8.6,3 C-8.6,-2.5 -1.5,-5.5 0,-9.5 Z" fill="#2f2f2f" stroke="#1a1a1a" stroke-width="1.6"/>
<polygon points="2472.7,118.5 2491.4,118.5 2482,136.8" fill="#c6c6c6" stroke="#161616" stroke-width="1" stroke-linejoin="round"/>
<g>
<rect x="2040.5" y="169.5" width="27" height="23.5" fill="#050505" stroke="#2a2a2a" stroke-width="1"/>
<polygon points="2044.5,189.5 2063.5,189.5 2054,173.5" fill="#c9c9c9"/>
<polygon points="2040.5,194 2046,194 2047.5,230 2049.5,270 2052.5,298 2057.5,312 2070,318 2090,321 2120,325 2160,328.5 2200,331 2240,332 2240,340 2040.5,340" fill="#2b6dc2"/>
<polygon points="2050,300 2058,314 2075,319.5 2110,324.5 2160,329 2220,332.5 2280,335 2330,335.5 2380,333.5 2400,332 2400,340 2050,340" fill="#2f8f8a"/>
<polygon points="2240,334 2300,336 2340,334.5 2385,333 2385,338 2240,338" fill="#b6653a"/>
<polygon points="2380,332 2393.4,329 2400.8,320.2 2412.6,311.3 2418.6,296.5 2425.3,278.7 2432,266.8 2434.9,243 2439.3,223.8 2442.3,204.5 2445.3,182.3 2449.7,169.6 2455,169.6 2455,336 2380,336" fill="#d9463a"/>
<polygon points="2405.2,332 2414.1,324.7 2421.5,315.8 2424.5,301 2429,289 2439.3,281.7 2442.3,263.9 2446,234 2449,204.5 2451.2,169.6 2456,169.6 2456,334 2405,334" fill="#58a455"/>
<polyline points="2405.2,332 2414.1,324.7 2421.5,315.8 2424.5,301 2429,289 2439.3,281.7 2442.3,263.9 2446,234 2449,204.5 2451.2,169.6" fill="none" stroke="#b9a244" stroke-width="1.2"/>
<polygon points="2455.4,194 2469,194.1 2469.8,231.2 2471.2,263.9 2472.7,293.5 2475,330.6 2479,347 2483.5,355.8 2466,355.8 2455.4,250" fill="#2a6aa6"/>
<polygon points="2455.4,194 2464.6,194.1 2466,231.2 2469,263.9 2470.8,293.5 2472.7,330.6 2476,347 2479.5,355.8 2466,355.8 2455.4,250" fill="#2a8c98"/>
<polygon points="2455.4,194 2460.9,194.1 2462.3,231.2 2466,252 2467.5,278.7 2469,308.4 2470.5,338 2473,349 2477,355.8 2466,355.8 2455.4,250" fill="#4b9c5c"/>
<polygon points="2040.5,284 2043,296 2047,308 2052,314 2057,317.5 2070,320.5 2090,323.5 2120,327.5 2160,331 2200,333.5 2240,334.5 2280,337 2320,337 2350,335.5 2380,335 2395,334 2409.7,332 2420,324.7 2426,315.8 2430.4,305.4 2434.9,295 2439.3,293.5 2442.3,292 2447.5,281.7 2449.7,263.9 2451.2,234 2453.4,204.5 2454.2,194.5 2454.2,198.6 2457.2,231.2 2460.9,252 2463.1,263.9 2465.3,293.5 2466.8,323.2 2469,347 2475,355.8 2040.5,355.8" fill="#cfcfcf"/>
<rect x="2456" y="169.5" width="28" height="24" fill="#050505" stroke="#2a2a2a" stroke-width="1"/>
<polygon points="2461,189.5 2480,189.5 2470.5,173.5" fill="#474747"/>
</g>
<rect x="2037.5" y="414.3" width="21.5" height="14" fill="none" stroke="#a4a4a4" stroke-width="1.5"/>
<g fill="none" stroke="#f4f4f4" stroke-width="3.6">
<path d="M2112.5,477 H2131.3 M2100.2,487.5 H2118.400 M2100.2,498 H2109.700 M2119.700,498 H2131.3"/>
<path d="M2100.2,477 H2102.500 M2128.400,487.5 H2131.3"/>
</g>
<g fill="none" stroke="#f4f4f4" stroke-width="2.8">
<circle cx="2107.5" cy="477" r="4"/><circle cx="2123.400" cy="487.5" r="4"/><circle cx="2114.700" cy="498" r="4"/>
</g>
<g fill="none" stroke="#b6b6b6" stroke-width="2.9">
<path d="M2181.2,481 H2199.700 V499.800 M2186.2,474.5 V493.700 H2206.5"/>
<path d="M2196.500,471 Q2205.500,471.500 2206.800,480.500"/><path d="M2190.500,502.600 Q2181.500,502.200 2180.200,493"/>
</g>
<polygon points="2198.500,466.200 2198.500,475.800 2192,471" fill="#b6b6b6"/><polygon points="2188.500,497.800 2188.500,507.400 2195,502.600" fill="#b6b6b6"/>
<g>
<path d="M2273.700,473.100 L2284.500,483.900 L2272.300,496 L2261.500,485.200 Z" fill="#b6b6b6" stroke="#b6b6b6" stroke-width="2" stroke-linejoin="round"/>
<path d="M2261.500,485.200 L2256.200,490.500 Q2255.400,492.500 2257,494.200 L2264,501.200 H2267.500 L2272.300,496" fill="none" stroke="#b6b6b6" stroke-width="2.4" stroke-linejoin="round"/>
<path d="M2264,501.200 H2285.200" stroke="#b6b6b6" stroke-width="2.6" fill="none"/>
</g>
<path d="M2332.200,491.100 Q2346,474.500 2359.700,491.100 Q2346,507.700 2332.200,491.100 Z" fill="#b6b6b6"/>
<circle cx="2346" cy="491.100" r="6.300" fill="#414141"/><circle cx="2346" cy="491.100" r="4.200" fill="#b6b6b6"/><circle cx="2347.800" cy="489.300" r="1.500" fill="#414141"/>
<path d="M2331.500,477.400 H2341.500 M2336.500,472.400 V482.400" stroke="#b6b6b6" stroke-width="2" fill="none"/>
<circle cx="2415.300" cy="487.500" r="14.600" fill="url(#dots)"/>
<circle cx="2415.300" cy="487.500" r="15.400" fill="none" stroke="#b6b6b6" stroke-width="2.800" stroke-dasharray="5.4 2.66"/>
<circle cx="2116.600" cy="519.300" r="3.600" fill="#b8b8b8"/><circle cx="2193.200" cy="519.300" r="3.600" fill="#b8b8b8"/>
<rect x="2170.0" y="592.2" width="1.3" height="5.6" fill="#363636"/>
<rect x="2202.5" y="592.2" width="1.3" height="5.6" fill="#363636"/>
<rect x="2234.9" y="592.2" width="1.3" height="5.6" fill="#363636"/>
<rect x="2267.3" y="592.2" width="1.3" height="5.6" fill="#363636"/>
<rect x="2299.8" y="592.2" width="1.3" height="5.6" fill="#363636"/>
<rect x="2332.2" y="592.2" width="1.3" height="5.6" fill="#363636"/>
<rect x="2364.7" y="592.2" width="1.3" height="5.6" fill="#363636"/>
<rect x="2159.7" y="600.5" width="216.60000000000036" height="6" rx="3" fill="url(#trk_red)" stroke="#2b2b2b" stroke-width="1"/>
<use href="#knob" x="2238.3" y="603.5"/>
<rect x="2170.0" y="626.1" width="1.3" height="5.6" fill="#363636"/>
<rect x="2189.5" y="628.8" width="1.3" height="3" fill="#363636"/>
<rect x="2209.0" y="628.8" width="1.3" height="3" fill="#363636"/>
<rect x="2228.4" y="628.8" width="1.3" height="3" fill="#363636"/>
<rect x="2247.9" y="628.8" width="1.3" height="3" fill="#363636"/>
<rect x="2267.3" y="626.1" width="1.3" height="5.6" fill="#363636"/>
<rect x="2286.8" y="628.8" width="1.3" height="3" fill="#363636"/>
<rect x="2306.3" y="628.8" width="1.3" height="3" fill="#363636"/>
<rect x="2325.7" y="628.8" width="1.3" height="3" fill="#363636"/>
<rect x="2345.2" y="628.8" width="1.3" height="3" fill="#363636"/>
<rect x="2364.7" y="626.1" width="1.3" height="5.6" fill="#363636"/>
<rect x="2159.7" y="634.4" width="216.60000000000036" height="6" rx="3" fill="url(#trk_lr)" stroke="#2b2b2b" stroke-width="1"/>
<use href="#knob" x="2233" y="637.4"/>
<rect x="2170.0" y="660.0" width="1.3" height="5.6" fill="#363636"/>
<rect x="2189.5" y="662.7" width="1.3" height="3" fill="#363636"/>
<rect x="2209.0" y="662.7" width="1.3" height="3" fill="#363636"/>
<rect x="2228.4" y="662.7" width="1.3" height="3" fill="#363636"/>
<rect x="2247.9" y="662.7" width="1.3" height="3" fill="#363636"/>
<rect x="2267.3" y="660.0" width="1.3" height="5.6" fill="#363636"/>
<rect x="2286.8" y="662.7" width="1.3" height="3" fill="#363636"/>
<rect x="2306.3" y="662.7" width="1.3" height="3" fill="#363636"/>
<rect x="2325.7" y="662.7" width="1.3" height="3" fill="#363636"/>
<rect x="2345.2" y="662.7" width="1.3" height="3" fill="#363636"/>
<rect x="2364.7" y="660.0" width="1.3" height="5.6" fill="#363636"/>
<rect x="2159.7" y="668.3" width="216.60000000000036" height="6" rx="3" fill="url(#trk_lr)" stroke="#2b2b2b" stroke-width="1"/>
<use href="#knob" x="2233" y="671.3"/>
<rect x="2170.0" y="693.9" width="1.3" height="5.6" fill="#363636"/>
<rect x="2189.5" y="696.6" width="1.3" height="3" fill="#363636"/>
<rect x="2209.0" y="696.6" width="1.3" height="3" fill="#363636"/>
<rect x="2228.4" y="696.6" width="1.3" height="3" fill="#363636"/>
<rect x="2247.9" y="696.6" width="1.3" height="3" fill="#363636"/>
<rect x="2267.3" y="693.9" width="1.3" height="5.6" fill="#363636"/>
<rect x="2286.8" y="696.6" width="1.3" height="3" fill="#363636"/>
<rect x="2306.3" y="696.6" width="1.3" height="3" fill="#363636"/>
<rect x="2325.7" y="696.6" width="1.3" height="3" fill="#363636"/>
<rect x="2345.2" y="696.6" width="1.3" height="3" fill="#363636"/>
<rect x="2364.7" y="693.9" width="1.3" height="5.6" fill="#363636"/>
<rect x="2159.7" y="702.2" width="216.60000000000036" height="6" rx="3" fill="url(#trk_rl)" stroke="#2b2b2b" stroke-width="1"/>
<use href="#knob" x="2308" y="705.2"/>
<rect x="2170.0" y="969.4" width="1.3" height="5.6" fill="#363636"/>
<rect x="2189.5" y="972.1" width="1.3" height="3" fill="#363636"/>
<rect x="2209.0" y="972.1" width="1.3" height="3" fill="#363636"/>
<rect x="2228.4" y="972.1" width="1.3" height="3" fill="#363636"/>
<rect x="2247.9" y="972.1" width="1.3" height="3" fill="#363636"/>
<rect x="2267.3" y="969.4" width="1.3" height="5.6" fill="#363636"/>
<rect x="2286.8" y="972.1" width="1.3" height="3" fill="#363636"/>
<rect x="2306.3" y="972.1" width="1.3" height="3" fill="#363636"/>
<rect x="2325.7" y="972.1" width="1.3" height="3" fill="#363636"/>
<rect x="2345.2" y="972.1" width="1.3" height="3" fill="#363636"/>
<rect x="2364.7" y="969.4" width="1.3" height="5.6" fill="#363636"/>
<rect x="2159.7" y="977.7" width="216.60000000000036" height="6" rx="3" fill="url(#trk_lr)" stroke="#2b2b2b" stroke-width="1"/>
<use href="#knob" x="2179.7" y="980.7"/>
<rect x="2170.0" y="1003.4" width="1.3" height="5.6" fill="#363636"/>
<rect x="2189.5" y="1006.1" width="1.3" height="3" fill="#363636"/>
<rect x="2209.0" y="1006.1" width="1.3" height="3" fill="#363636"/>
<rect x="2228.4" y="1006.1" width="1.3" height="3" fill="#363636"/>
<rect x="2247.9" y="1006.1" width="1.3" height="3" fill="#363636"/>
<rect x="2267.3" y="1003.4" width="1.3" height="5.6" fill="#363636"/>
<rect x="2286.8" y="1006.1" width="1.3" height="3" fill="#363636"/>
<rect x="2306.3" y="1006.1" width="1.3" height="3" fill="#363636"/>
<rect x="2325.7" y="1006.1" width="1.3" height="3" fill="#363636"/>
<rect x="2345.2" y="1006.1" width="1.3" height="3" fill="#363636"/>
<rect x="2364.7" y="1003.4" width="1.3" height="5.6" fill="#363636"/>
<rect x="2159.7" y="1011.7" width="216.60000000000036" height="6" rx="3" fill="url(#trk_lr)" stroke="#2b2b2b" stroke-width="1"/>
<use href="#knob" x="2268.8" y="1014.7"/>
<rect x="2170.0" y="1037.3" width="1.3" height="5.6" fill="#363636"/>
<rect x="2189.5" y="1040.0" width="1.3" height="3" fill="#363636"/>
<rect x="2209.0" y="1040.0" width="1.3" height="3" fill="#363636"/>
<rect x="2228.4" y="1040.0" width="1.3" height="3" fill="#363636"/>
<rect x="2247.9" y="1040.0" width="1.3" height="3" fill="#363636"/>
<rect x="2267.3" y="1037.3" width="1.3" height="5.6" fill="#363636"/>
<rect x="2286.8" y="1040.0" width="1.3" height="3" fill="#363636"/>
<rect x="2306.3" y="1040.0" width="1.3" height="3" fill="#363636"/>
<rect x="2325.7" y="1040.0" width="1.3" height="3" fill="#363636"/>
<rect x="2345.2" y="1040.0" width="1.3" height="3" fill="#363636"/>
<rect x="2364.7" y="1037.3" width="1.3" height="5.6" fill="#363636"/>
<rect x="2159.7" y="1045.6" width="216.60000000000036" height="6" rx="3" fill="url(#trk_lr)" stroke="#2b2b2b" stroke-width="1"/>
<use href="#knob" x="2170.8" y="1048.6"/>
<rect x="2170.0" y="1087.3" width="1.3" height="5.6" fill="#363636"/>
<rect x="2189.5" y="1090.0" width="1.3" height="3" fill="#363636"/>
<rect x="2209.0" y="1090.0" width="1.3" height="3" fill="#363636"/>
<rect x="2228.4" y="1090.0" width="1.3" height="3" fill="#363636"/>
<rect x="2247.9" y="1090.0" width="1.3" height="3" fill="#363636"/>
<rect x="2267.3" y="1087.3" width="1.3" height="5.6" fill="#363636"/>
<rect x="2286.8" y="1090.0" width="1.3" height="3" fill="#363636"/>
<rect x="2306.3" y="1090.0" width="1.3" height="3" fill="#363636"/>
<rect x="2325.7" y="1090.0" width="1.3" height="3" fill="#363636"/>
<rect x="2345.2" y="1090.0" width="1.3" height="3" fill="#363636"/>
<rect x="2364.7" y="1087.3" width="1.3" height="5.6" fill="#363636"/>
<rect x="2159.7" y="1095.6" width="216.60000000000036" height="6" rx="3" fill="url(#trk_lr)" stroke="#2b2b2b" stroke-width="1"/>
<use href="#knob" x="2268.8" y="1098.6"/>
<rect x="2170.0" y="1121.2" width="1.3" height="5.6" fill="#363636"/>
<rect x="2189.5" y="1123.9" width="1.3" height="3" fill="#363636"/>
<rect x="2209.0" y="1123.9" width="1.3" height="3" fill="#363636"/>
<rect x="2228.4" y="1123.9" width="1.3" height="3" fill="#363636"/>
<rect x="2247.9" y="1123.9" width="1.3" height="3" fill="#363636"/>
<rect x="2267.3" y="1121.2" width="1.3" height="5.6" fill="#363636"/>
<rect x="2286.8" y="1123.9" width="1.3" height="3" fill="#363636"/>
<rect x="2306.3" y="1123.9" width="1.3" height="3" fill="#363636"/>
<rect x="2325.7" y="1123.9" width="1.3" height="3" fill="#363636"/>
<rect x="2345.2" y="1123.9" width="1.3" height="3" fill="#363636"/>
<rect x="2364.7" y="1121.2" width="1.3" height="5.6" fill="#363636"/>
<rect x="2159.7" y="1129.5" width="216.60000000000036" height="6" rx="3" fill="url(#trk_lr)" stroke="#2b2b2b" stroke-width="1"/>
<use href="#knob" x="2306.2" y="1132.5"/>
<rect x="2170.0" y="1155.2" width="1.3" height="5.6" fill="#363636"/>
<rect x="2189.5" y="1157.9" width="1.3" height="3" fill="#363636"/>
<rect x="2209.0" y="1157.9" width="1.3" height="3" fill="#363636"/>
<rect x="2228.4" y="1157.9" width="1.3" height="3" fill="#363636"/>
<rect x="2247.9" y="1157.9" width="1.3" height="3" fill="#363636"/>
<rect x="2267.3" y="1155.2" width="1.3" height="5.6" fill="#363636"/>
<rect x="2286.8" y="1157.9" width="1.3" height="3" fill="#363636"/>
<rect x="2306.3" y="1157.9" width="1.3" height="3" fill="#363636"/>
<rect x="2325.7" y="1157.9" width="1.3" height="3" fill="#363636"/>
<rect x="2345.2" y="1157.9" width="1.3" height="3" fill="#363636"/>
<rect x="2364.7" y="1155.2" width="1.3" height="5.6" fill="#363636"/>
<rect x="2159.7" y="1163.5" width="216.60000000000036" height="6" rx="3" fill="url(#trk_lr)" stroke="#2b2b2b" stroke-width="1"/>
<use href="#knob" x="2268.8" y="1166.5"/>
<rect x="2412" y="595" width="1.2" height="4" fill="#3a3a3a"/>
<polygon points="2454,920 2471.4,920 2462.7,936" fill="#ececec" stroke="#161616" stroke-width="1" stroke-linejoin="round"/>
<polygon points="2474,1217 2491,1217 2482.5,1234" fill="#c8c8c8" stroke="#161616" stroke-width="1" stroke-linejoin="round"/>
<polygon points="2257.5,1246 2266.5,1246 2262,1251" fill="#7a7a7a"/>
<g fill="none" stroke="#606060" stroke-width="2"><path d="M2028.5,1225 Q2038.5,1213.5 2048.5,1225 Q2038.5,1236.500 2028.5,1225 Z"/><circle cx="2038.5" cy="1225" r="3.6" fill="#606060" stroke="none"/></g>
<path d="M1450.25,280.25 L1456.25,285.75 L1464.75,272.75" fill="none" stroke="#fff" stroke-width="3.2" stroke-linecap="round" stroke-linejoin="round"/>
<path d="M1790.25,624.25 L1796.25,629.75 L1804.75,616.75" fill="none" stroke="#fff" stroke-width="3.2" stroke-linecap="round" stroke-linejoin="round"/>
<path d="M1450.465,462.455 L1456.105,467.625 L1464.095,455.405" fill="none" stroke="#b9b9b9" stroke-width="3" stroke-linecap="round" stroke-linejoin="round"/>
<circle cx="1911.9" cy="278.8" r="13.9" fill="#787878"/><circle cx="1911.70" cy="271.70" r="2.6" fill="#fff"/><path d="M1908.20,276.10 H1913.50 V285.40 H1915.60 V288.00 H1908.20 V285.40 H1909.90 V278.00 H1908.20 Z" fill="#fff"/>
<circle cx="1911.9" cy="460.6" r="13.9" fill="#787878"/><circle cx="1911.70" cy="453.50" r="2.6" fill="#fff"/><path d="M1908.20,457.90 H1913.50 V467.20 H1915.60 V469.80 H1908.20 V467.20 H1909.90 V459.80 H1908.20 Z" fill="#fff"/>
<circle cx="1911.9" cy="551.6" r="13.9" fill="#787878"/><circle cx="1911.70" cy="544.50" r="2.6" fill="#fff"/><path d="M1908.20,548.90 H1913.50 V558.20 H1915.60 V560.80 H1908.20 V558.20 H1909.90 V550.80 H1908.20 Z" fill="#fff"/>
<g fill="none" stroke="#555" stroke-width="2.1" stroke-linecap="round"><circle cx="1432.05" cy="625.8" r="10"/><path d="M1428.4,611.3 H1436.1 M1432.05,611.5 V615.4 M1431.9,625.9 L1439.1,618.7"/><path d="M1422.7,615 L1424.3,616.5" stroke-width="3"/></g>
<g>
<text x="37" y="61.3" font-size="26.8" fill="#0a0a0a" textLength="39" lengthAdjust="spacingAndGlyphs" font-weight="bold">LrC</text>
<text x="106.7" y="40.9" font-size="17.7" fill="#adadad" textLength="196.0" lengthAdjust="spacingAndGlyphs" stroke="#000" stroke-width="0.45">Adobe Lightroom Classic</text>
<text x="108.7" y="68.6" font-size="26.7" fill="#bcbcbc" textLength="182.0" lengthAdjust="spacingAndGlyphs" stroke="#000" stroke-width="0.6">Danny Maiorca</text>
<text x="1495" y="75" font-size="37.5" fill="#a2a2a2" textLength="112.4" lengthAdjust="spacingAndGlyphs" stroke="#000" stroke-width="0.7">Library</text>
<text x="1649.5" y="75" font-size="37.5" fill="#ffffff" textLength="130.5" lengthAdjust="spacingAndGlyphs" stroke="#000" stroke-width="0.7">Develop</text>
<text x="1823" y="75" font-size="37.5" fill="#a2a2a2" textLength="68" lengthAdjust="spacingAndGlyphs" stroke="#000" stroke-width="0.7">Map</text>
<text x="1935" y="75" font-size="37.5" fill="#a2a2a2" textLength="79" lengthAdjust="spacingAndGlyphs" stroke="#000" stroke-width="0.7">Book</text>
<text x="2055" y="75" font-size="37.5" fill="#a2a2a2" textLength="160" lengthAdjust="spacingAndGlyphs" stroke="#000" stroke-width="0.7">Slideshow</text>
<text x="2257" y="75" font-size="37.5" fill="#a2a2a2" textLength="73" lengthAdjust="spacingAndGlyphs" stroke="#000" stroke-width="0.7">Print</text>
<text x="2370" y="75" font-size="37.5" fill="#a2a2a2" textLength="70" lengthAdjust="spacingAndGlyphs" stroke="#000" stroke-width="0.7">Web</text>
</g>
<g class="sh">
<text x="101" y="136.7" font-size="25" fill="#c6c6c6" textLength="108.7" lengthAdjust="spacingAndGlyphs">Navigator</text>
<text x="330" y="133.5" font-size="16" fill="#e8e8e8" textLength="21" lengthAdjust="spacingAndGlyphs">FIT</text>
<text x="388" y="133.5" font-size="16" fill="#9a9a9a" textLength="39" lengthAdjust="spacingAndGlyphs">100%</text>
<text x="456" y="133.5" font-size="16" fill="#9a9a9a" textLength="43.6" lengthAdjust="spacingAndGlyphs">66.7%</text>
<text x="100.3" y="305.4" font-size="25" fill="#c6c6c6" textLength="82.0" lengthAdjust="spacingAndGlyphs">Presets</text>
<text x="100" y="359.6" font-size="25" fill="#c6c6c6" textLength="117.4" lengthAdjust="spacingAndGlyphs">Snapshots</text>
<text x="100.3" y="412.5" font-size="25" fill="#c6c6c6" textLength="82.4" lengthAdjust="spacingAndGlyphs">History</text>
<text x="100" y="466" font-size="25" fill="#c6c6c6" textLength="126" lengthAdjust="spacingAndGlyphs">Collections</text>
<text x="139.5" y="1286" font-size="24.5" fill="#c8c8c8" textLength="67.5" lengthAdjust="spacingAndGlyphs">Copy...</text>
<text x="388" y="1286" font-size="24.5" fill="#c8c8c8" textLength="55.75" lengthAdjust="spacingAndGlyphs">Paste</text>
</g>
<g>
<text x="80.7" y="208" font-size="19.4" fill="#5b5b5b" textLength="113.3" lengthAdjust="spacingAndGlyphs">Preset : None</text>
<text x="81.4" y="247" font-size="19.4" fill="#5b5b5b" textLength="64.0" lengthAdjust="spacingAndGlyphs">Amount</text>
<text x="472" y="246" font-size="23" fill="#5f5f5f" textLength="37.7" lengthAdjust="spacingAndGlyphs">100</text>
</g>
<g class="sh">
<text x="2337.8" y="136.8" font-size="25.5" fill="#c6c6c6" textLength="117.6" lengthAdjust="spacingAndGlyphs">Histogram</text>
<text x="2040.8" y="385.7" font-size="20" fill="#b4b4b4" textLength="62.8" lengthAdjust="spacingAndGlyphs">ISO 400</text>
<text x="2170" y="385.7" font-size="20" fill="#b4b4b4" textLength="69.8" lengthAdjust="spacingAndGlyphs">24.7 mm</text>
<text x="2288.4" y="385.7" font-size="20" fill="#b4b4b4" textLength="53.4" lengthAdjust="spacingAndGlyphs">ƒ / 6,4</text>
<text x="2406.4" y="385.7" font-size="20" fill="#b4b4b4" textLength="75.3" lengthAdjust="spacingAndGlyphs">1/250 sec</text>
<text x="2065.7" y="426.5" font-size="20" fill="#b0b0b0" textLength="123.6" lengthAdjust="spacingAndGlyphs">Original Photo</text>
<text x="2161.5" y="574.5" font-size="19.5" fill="#c8c8c8" textLength="97.5" lengthAdjust="spacingAndGlyphs">Sharpening</text>
<text x="2078.6" y="606.4" font-size="19" fill="#c2c2c2" textLength="64.6" lengthAdjust="spacingAndGlyphs">Amount</text>
<text x="2473.6" y="608.6" font-size="21" fill="#e6e6e6" text-anchor="end">52</text>
<text x="2090.7" y="640.3" font-size="19" fill="#c2c2c2" textLength="52.5" lengthAdjust="spacingAndGlyphs">Radius</text>
<text x="2473.6" y="642.5" font-size="21" fill="#e6e6e6" text-anchor="end">1,3</text>
<text x="2096.8999999999996" y="674.2" font-size="19" fill="#c2c2c2" textLength="46.3" lengthAdjust="spacingAndGlyphs">Detail</text>
<text x="2473.6" y="676.4000000000001" font-size="21" fill="#e6e6e6" text-anchor="end">32</text>
<text x="2077.5" y="708.1" font-size="19" fill="#c2c2c2" textLength="65.7" lengthAdjust="spacingAndGlyphs">Masking</text>
<text x="2473.6" y="710.3000000000001" font-size="21" fill="#e6e6e6" text-anchor="end">71</text>
<text x="2055.7" y="983.4" font-size="19" fill="#c2c2c2" textLength="87.5" lengthAdjust="spacingAndGlyphs">Luminance</text>
<text x="2473.6" y="985.6" font-size="21" fill="#e6e6e6" text-anchor="end">5</text>
<text x="2096.8999999999996" y="1017.5" font-size="19" fill="#c2c2c2" textLength="46.3" lengthAdjust="spacingAndGlyphs">Detail</text>
<text x="2473.6" y="1019.7" font-size="21" fill="#9c9c9c" text-anchor="end">50</text>
<text x="2077.5" y="1051.3" font-size="19" fill="#c2c2c2" textLength="65.7" lengthAdjust="spacingAndGlyphs">Contrast</text>
<text x="2473.6" y="1053.5" font-size="21" fill="#9c9c9c" text-anchor="end">0</text>
<text x="2100.8999999999996" y="1101.4" font-size="19" fill="#c2c2c2" textLength="42.3" lengthAdjust="spacingAndGlyphs">Color</text>
<text x="2473.6" y="1103.6000000000001" font-size="21" fill="#e6e6e6" text-anchor="end">50</text>
<text x="2096.8999999999996" y="1135.3" font-size="19" fill="#c2c2c2" textLength="46.3" lengthAdjust="spacingAndGlyphs">Detail</text>
<text x="2473.6" y="1137.5" font-size="21" fill="#e6e6e6" text-anchor="end">70</text>
<text x="2044.6" y="1169.3" font-size="19" fill="#c2c2c2" textLength="98.6" lengthAdjust="spacingAndGlyphs">Smoothness</text>
<text x="2473.6" y="1171.5" font-size="21" fill="#9c9c9c" text-anchor="end">50</text>
<text x="2053" y="763" font-size="20" fill="#c4c4c4" textLength="140.7" lengthAdjust="spacingAndGlyphs">Noise Reduction</text>
<text x="2076.4" y="809.5" font-size="21" fill="#e4e4e4" textLength="80.6" lengthAdjust="spacingAndGlyphs">Denoise...</text>
<text x="2053" y="855.4" font-size="20" fill="#b8b8b8" textLength="391" lengthAdjust="spacingAndGlyphs">Reduce noise with AI. The result will be saved</text>
<text x="2053" y="882" font-size="20" fill="#b8b8b8" textLength="125" lengthAdjust="spacingAndGlyphs">as a new DNG.</text>
<text x="2053" y="935.5" font-size="20" fill="#c4c4c4" textLength="212" lengthAdjust="spacingAndGlyphs">Manual Noise Reduction</text>
<text x="2263" y="1235" font-size="26.5" fill="#c6c6c6" textLength="191" lengthAdjust="spacingAndGlyphs">Lens Corrections</text>
<text x="2095" y="1287" font-size="24.5" fill="#c8c8c8" textLength="91" lengthAdjust="spacingAndGlyphs">Previous</text>
<text x="2353.75" y="1287" font-size="24.5" fill="#c8c8c8" textLength="58.75" lengthAdjust="spacingAndGlyphs">Reset</text>
</g>
<g class="dlg">
<text x="1179.5" y="113.75" font-size="21.6" fill="#4a4545" textLength="193.3" lengthAdjust="spacingAndGlyphs" font-weight="bold" stroke="none">Enhance Preview</text>
<text x="1419.5" y="188.75" font-size="21" fill="#242424" textLength="528.5" lengthAdjust="spacingAndGlyphs" stroke="#242424" stroke-width="0.45">Enhance uses AI to improve image quality. The result</text>
<text x="1419.5" y="215" font-size="21" fill="#242424" textLength="280.5" lengthAdjust="spacingAndGlyphs" stroke="#242424" stroke-width="0.45">will be saved as a new DNG.</text>
<text x="1482.8" y="287.5" font-size="21" fill="#1f1f1f" textLength="84.4" lengthAdjust="spacingAndGlyphs" stroke="#1f1f1f" stroke-width="0.45">Denoise</text>
<text x="1446" y="342" font-size="19.5" fill="#1f1f1f" textLength="71" lengthAdjust="spacingAndGlyphs" stroke="#1f1f1f" stroke-width="0.45">Amount</text>
<text x="1918" y="338" font-size="22" fill="#242424" text-anchor="end" stroke="#242424" stroke-width="0.45">24</text>
<text x="1482.5" y="469.5" font-size="21" fill="#a9a9a9" textLength="123.0" lengthAdjust="spacingAndGlyphs" stroke="#a9a9a9" stroke-width="0.45">Raw Details</text>
<text x="1482.5" y="560.5" font-size="21" fill="#a9a9a9" textLength="180.75" lengthAdjust="spacingAndGlyphs" stroke="#a9a9a9" stroke-width="0.45">Super Resolution</text>
<text x="1455" y="631" font-size="20.6" fill="#1f1f1f" textLength="222" lengthAdjust="spacingAndGlyphs" stroke="#1f1f1f" stroke-width="0.45">Estimated time: 2 min.</text>
<text x="1822" y="631" font-size="20.6" fill="#1f1f1f" textLength="128" lengthAdjust="spacingAndGlyphs" stroke="#1f1f1f" stroke-width="0.45">Create Stack</text>
<text x="1419.5" y="675.75" font-size="21" fill="#4a60c9" textLength="112.25" lengthAdjust="spacingAndGlyphs" stroke="#4a60c9" stroke-width="0.45">Learn More</text>
<text x="1511.25" y="942" font-size="22.3" fill="#262626" textLength="73.25" lengthAdjust="spacingAndGlyphs" stroke="#262626" stroke-width="0.45">Cancel</text>
<text x="1777.5" y="942.5" font-size="22.3" fill="#ffffff" textLength="91.5" lengthAdjust="spacingAndGlyphs" stroke="#ffffff" stroke-width="0.45">Enhance</text>
</g>
</svg>
</body></html>
